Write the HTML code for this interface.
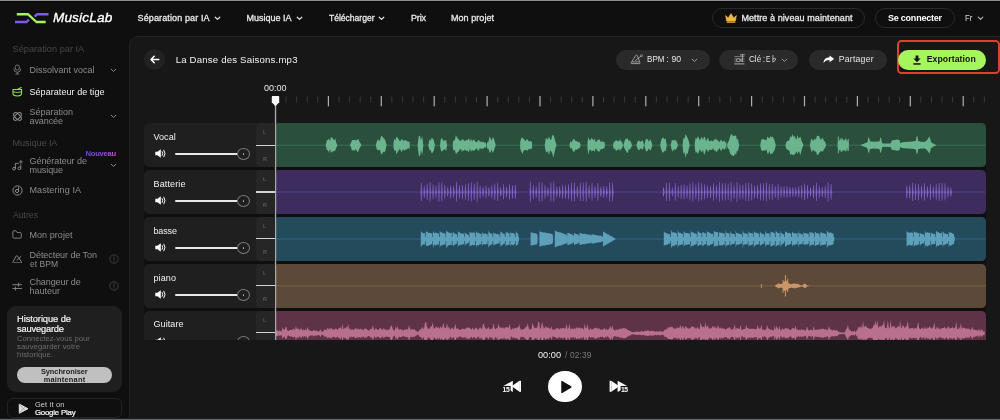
<!DOCTYPE html>
<html><head><meta charset="utf-8"><title>MusicLab</title>
<style>
*{box-sizing:border-box;margin:0;padding:0}
html,body{width:1000px;height:420px;overflow:hidden;background:#0f0f0f;font-family:"Liberation Sans",sans-serif;color:#fff}
body{position:relative}
.abs,.pill,.lbl,.lr,.tr{position:absolute;white-space:nowrap}
.topline{position:absolute;left:0;top:0;width:1000px;height:1px;background:#8e8f91}
.topline2{position:absolute;left:0;top:1px;width:1000px;height:1px;background:#060606}
.botline{position:absolute;left:0;top:418px;width:1000px;height:2px;background:linear-gradient(#1c1e1f 0,#1c1e1f 50%,#636a6c 50%,#636a6c 100%);z-index:50}
.logo{font-size:13.6px;font-style:italic;line-height:17px;color:#fff;-webkit-text-stroke:0.35px #fff}
.nav{font-size:9px;line-height:11px;color:#e8e8e8;-webkit-text-stroke:0.3px #e8e8e8}
.b{font-weight:bold;-webkit-text-stroke:0}
.chev{position:absolute;width:7px;height:5px}
.hb{position:absolute;top:8px;height:20px;border:1px solid #2a2a2a;border-radius:10px}
.main{position:absolute;left:129px;top:36px;width:880px;height:400px;background:#171717;border:1px solid #212121;border-top-left-radius:9px}
.sh{font-size:9.2px;line-height:11px;color:#484848}
.sb{font-size:9px;line-height:11px;color:#8c8c8c}
.sb.on{color:#f2f2f2}
.pill{top:49.5px;height:20.2px;border-radius:10px;background:#2a2a2a}
.pt{font-size:8.7px;line-height:11px;color:#e6e6e6}
.lbl{left:144px;width:122px;height:44.6px;background:#1f1f1f;border-radius:5px 0 0 5px}
.nm{font-size:9px;line-height:11px;color:#f4f4f4}
.spk{position:absolute;left:11px;top:26.5px}
.sl{position:absolute;left:31px;top:30.6px;width:63px;height:1.4px;background:#e8e8e8;border-radius:1px}
.kn{position:absolute;left:93.1px;top:25.4px;width:12.7px;height:12px;border:1px solid #7c7c7c;border-radius:50%;background:#1f1f1f}
.kn:after{content:"";position:absolute;left:4.5px;top:4.2px;width:1.6px;height:1.6px;background:#bbb;border-radius:50%}
.lr{left:255.7px;width:18.5px;height:44.6px;background:#262626;border-radius:4px 0 0 4px}
.lr span{position:absolute;left:7.3px;font-size:5.5px;line-height:6px;color:#5a5a5a;font-weight:bold}
.lr .l{top:6px} .lr .r{top:32.7px}
.lr i{position:absolute;left:0;top:21.7px;width:19.2px;height:1.1px;background:#d2d2d2}
.tr{left:276px;width:709.5px;height:44.6px;border-radius:1.5px 4.5px 4.5px 1.5px}
.bottom{position:absolute;left:130px;top:339.5px;width:870px;height:81px;background:#171717}
.hs{font-size:7.6px;line-height:9px;color:#6c6c6c}
.sy{font-size:7.4px;line-height:8px;font-weight:bold;color:#1c1c1c}
</style></head><body>
<div id="root" style="position:absolute;left:0;top:0;width:1000px;height:420px;will-change:transform">
<div class="topline"></div><div class="topline2"></div>

<!-- logo -->
<svg class="abs" style="left:13px;top:11px" width="38" height="14" viewBox="0 0 38 14">
<path d="M3.8,3.3H15.2L23.4,11H32.7" stroke="#a3f55b" stroke-width="2.4" fill="none" stroke-linejoin="round"/>
<path d="M2,11H13.5L15.9,8.7" stroke="#7a5af5" stroke-width="2.4" fill="none" stroke-linejoin="round"/>
<path d="M35.5,3.3H24L21.6,5.5" stroke="#7a5af5" stroke-width="2.4" fill="none" stroke-linejoin="round"/>
</svg>
<div class="abs logo" style="left:52.9px;letter-spacing:0.173px;top:9.2px;">MusicLab</div>

<div class="abs nav" style="left:137.6px;letter-spacing:0.122px;top:13px;">Séparation par IA</div><svg class="chev" style="left:213.7px;top:16.3px" viewBox="0 0 7 5"><path d="M1.2,1.2L3.5,3.4L5.8,1.2" stroke="#e4e4e4" stroke-width="1.2" fill="none" stroke-linecap="round" stroke-linejoin="round"/></svg>
<div class="abs nav" style="left:246.6px;letter-spacing:-0.003px;top:13px;">Musique IA</div><svg class="chev" style="left:295.7px;top:16.3px" viewBox="0 0 7 5"><path d="M1.2,1.2L3.5,3.4L5.8,1.2" stroke="#e4e4e4" stroke-width="1.2" fill="none" stroke-linecap="round" stroke-linejoin="round"/></svg>
<div class="abs nav" style="left:328.5px;transform:scaleX(0.9473);transform-origin:0 0;top:13px;">Télécharger</div><svg class="chev" style="left:378px;top:16.3px" viewBox="0 0 7 5"><path d="M1.2,1.2L3.5,3.4L5.8,1.2" stroke="#e4e4e4" stroke-width="1.2" fill="none" stroke-linecap="round" stroke-linejoin="round"/></svg>
<div class="abs nav" style="left:411px;letter-spacing:-0.167px;top:13px;">Prix</div>
<div class="abs nav" style="left:451px;letter-spacing:0.052px;top:13px;">Mon projet</div>

<div class="hb" style="left:711.5px;width:153.5px"></div>
<svg class="abs" style="left:725px;top:13px" width="12" height="10" viewBox="0 0 12 10"><path d="M0.6,2.6L3.2,4.9L6,0.6L8.8,4.9L11.4,2.6L10.4,8H1.6Z" fill="#f6b443" stroke="#f6b443" stroke-width="0.6" stroke-linejoin="round"/><rect x="1.6" y="8.6" width="8.8" height="1.2" rx="0.5" fill="#f6b443"/></svg>
<div class="abs nav" style="left:741.4px;letter-spacing:0.081px;top:13px;color:#ececec">Mettre à niveau maintenant</div>
<div class="hb" style="left:875px;width:80px"></div>
<div class="abs nav b" style="left:888px;letter-spacing:-0.230px;top:13px;color:#fff">Se connecter</div>
<div class="abs nav" style="left:965px;transform:scaleX(0.9486);transform-origin:0 0;top:13.2px;-webkit-text-stroke:0;font-size:8.4px;color:#d8d8d8">Fr</div>
<svg class="chev" style="left:977px;top:16.3px" viewBox="0 0 7 5"><path d="M1.2,1.2L3.5,3.4L5.8,1.2" stroke="#b8b8b8" stroke-width="1.1" fill="none" stroke-linecap="round" stroke-linejoin="round"/></svg>

<!-- sidebar -->
<div class="abs sh" style="left:12.5px;letter-spacing:0.015px;top:43.5px;">Séparation par IA</div>
<svg class="abs" style="left:12.8px;top:64px" width="8.6" height="11" viewBox="0 0 10 12"><rect x="2.6" y="0.7" width="4.8" height="6" rx="2.4" stroke="#7e7e7e" stroke-width="1" fill="none"/><path d="M0.9,5.2a4.1,4.1 0 0 0 8.2,0M5,9.4V11.2M3.2,11.3H6.8" stroke="#7e7e7e" stroke-width="1" fill="none" stroke-linecap="round"/></svg>
<div class="abs sb" style="left:29.5px;letter-spacing:-0.002px;top:64.5px;">Dissolvant vocal</div>
<svg class="chev" style="left:110px;top:67.5px" viewBox="0 0 7 5"><path d="M1.2,1.2L3.5,3.4L5.8,1.2" stroke="#8c8c8c" stroke-width="1" fill="none" stroke-linecap="round" stroke-linejoin="round"/></svg>

<svg class="abs" style="left:12.2px;top:87px" width="10.6" height="9.8" viewBox="0 0 11 10"><path d="M1,2.6V6.4Q1,9.2 5.5,9.2Q10,9.2 10,6.4V2.6Z" stroke="#96e052" stroke-width="1.1" fill="none" stroke-linejoin="round"/><path d="M1,4.9Q5.5,6.3 10,4.9" stroke="#96e052" stroke-width="1" fill="none"/><path d="M5.6,2.6L9.6,0.5" stroke="#96e052" stroke-width="1.1" stroke-linecap="round"/></svg>
<div class="abs sb on" style="left:29.5px;letter-spacing:0.055px;top:86.5px;">Séparateur de tige</div>

<svg class="abs" style="left:12px;top:111px" width="11" height="11" viewBox="0 0 11 11"><ellipse cx="5.5" cy="5.5" rx="4.8" ry="2.4" transform="rotate(45 5.5 5.5)" stroke="#8c8c8c" stroke-width="1" fill="none"/><ellipse cx="5.5" cy="5.5" rx="4.8" ry="2.4" transform="rotate(-45 5.5 5.5)" stroke="#8c8c8c" stroke-width="1" fill="none"/></svg>
<div class="abs sb" style="left:29.5px;letter-spacing:-0.005px;top:106.8px;">Séparation</div>
<div class="abs sb" style="left:29.5px;letter-spacing:-0.089px;top:116.3px;">avancée</div>
<svg class="chev" style="left:110px;top:114.2px" viewBox="0 0 7 5"><path d="M1.2,1.2L3.5,3.4L5.8,1.2" stroke="#8c8c8c" stroke-width="1" fill="none" stroke-linecap="round" stroke-linejoin="round"/></svg>

<div class="abs sh" style="left:12.5px;letter-spacing:-0.108px;top:137.8px;">Musique IA</div>
<div class="abs " style="left:85.5px;letter-spacing:-0.221px;top:149.3px;font-size:7.6px;line-height:9px;font-weight:bold;background:linear-gradient(90deg,#6a48f0,#c850c8);-webkit-background-clip:text;background-clip:text;color:transparent">Nouveau</div>
<svg class="abs" style="left:11.5px;top:159.5px" width="12" height="11" viewBox="0 0 12 11"><circle cx="2" cy="8.7" r="1.35" stroke="#8c8c8c" stroke-width="0.95" fill="none"/><circle cx="7.4" cy="8.3" r="1.35" stroke="#8c8c8c" stroke-width="0.95" fill="none"/><path d="M3.4,8.7V3.4H6.4M8.8,8.3V4.8" stroke="#8c8c8c" stroke-width="0.95" fill="none" stroke-linejoin="round" stroke-linecap="round"/><path d="M8.9,0.5V3.3M7.5,1.9H10.3" stroke="#8c8c8c" stroke-width="0.9" stroke-linecap="round"/></svg>
<div class="abs sb" style="left:29.5px;letter-spacing:-0.046px;top:156.3px;">Générateur de</div>
<div class="abs sb" style="left:29.5px;letter-spacing:-0.089px;top:165.2px;">musique</div>
<svg class="chev" style="left:110px;top:163.2px" viewBox="0 0 7 5"><path d="M1.2,1.2L3.5,3.4L5.8,1.2" stroke="#8c8c8c" stroke-width="1" fill="none" stroke-linecap="round" stroke-linejoin="round"/></svg>

<svg class="abs" style="left:12px;top:184.5px" width="11" height="11" viewBox="0 0 11 11"><circle cx="5.5" cy="5.5" r="4.6" stroke="#8c8c8c" stroke-width="1" fill="none"/><circle cx="5" cy="6" r="1.6" stroke="#8c8c8c" stroke-width="1" fill="none"/><path d="M6.6,6V2.6" stroke="#8c8c8c" stroke-width="1" stroke-linecap="round"/></svg>
<div class="abs sb" style="left:29.5px;letter-spacing:0.088px;top:184.5px;">Mastering IA</div>

<div class="abs sh" style="left:12.5px;transform:scaleX(0.9412);transform-origin:0 0;top:209.5px;">Autres</div>
<svg class="abs" style="left:12px;top:230.2px" width="10.2" height="8.8" viewBox="0 0 11 10"><path d="M0.7,2V8Q0.7,9.3 2,9.3H9Q10.3,9.3 10.3,8V4.2Q10.3,2.9 9,2.9H5.4L4.2,0.9H1.8Q0.7,0.9 0.7,2Z" stroke="#8c8c8c" stroke-width="1" fill="none" stroke-linejoin="round"/></svg>
<div class="abs sb" style="left:29.5px;letter-spacing:0.052px;top:229.5px;">Mon projet</div>

<svg class="abs" style="left:12px;top:254.6px" width="10.6" height="8.7" viewBox="0 0 11 9"><path d="M4.3,1.1Q5.1,0.2 5.9,1.2L9.7,7Q10.2,8.2 9,8.2H1.7Q0.5,8.2 1.1,7Z" stroke="#8c8c8c" stroke-width="1" fill="none" stroke-linejoin="round"/><path d="M5.2,5.4L9.4,1.4" stroke="#8c8c8c" stroke-width="1" stroke-linecap="round"/><path d="M6.6,1.8L10.2,-1.4" stroke="#0e0e0e" stroke-width="1.4"/></svg>
<div class="abs sb" style="left:29.5px;letter-spacing:-0.059px;top:249.7px;">Détecteur de Ton</div>
<div class="abs sb" style="left:29.5px;transform:scaleX(0.9487);transform-origin:0 0;top:259px;">et BPM</div>
<svg class="abs" style="left:109px;top:254px" width="10" height="10" viewBox="0 0 10 10"><circle cx="5" cy="5" r="4.2" stroke="#3e3e3e" stroke-width="1" fill="none"/><path d="M5,2.6V5.6M5,6.9V7.4" stroke="#3e3e3e" stroke-width="1" stroke-linecap="round"/></svg>

<svg class="abs" style="left:12.3px;top:281.6px" width="10.4" height="9" viewBox="0 0 11 9"><path d="M0.8,2.6H10.2M0.8,6.6H10.2M7,0.8V4.2M3.6,5V8.4" stroke="#8c8c8c" stroke-width="0.95" stroke-linecap="round"/></svg>
<div class="abs sb" style="left:29.5px;letter-spacing:-0.080px;top:276.8px;">Changeur de</div>
<div class="abs sb" style="left:29.5px;letter-spacing:-0.005px;top:285.5px;">hauteur</div>
<svg class="abs" style="left:109px;top:280.5px" width="10" height="10" viewBox="0 0 10 10"><circle cx="5" cy="5" r="4.2" stroke="#3e3e3e" stroke-width="1" fill="none"/><path d="M5,2.6V5.6M5,6.9V7.4" stroke="#3e3e3e" stroke-width="1" stroke-linecap="round"/></svg>

<div class="abs" style="left:7px;top:305.5px;width:114.5px;height:86px;background:#1f1f1f;border-radius:9px"></div>
<div class="abs " style="left:17.1px;letter-spacing:-0.082px;top:313.8px;font-size:9.3px;line-height:11px;color:#f4f4f4;-webkit-text-stroke:0.2px #f4f4f4">Historique de</div>
<div class="abs " style="left:17.1px;letter-spacing:-0.188px;top:324.1px;font-size:9.3px;line-height:11px;color:#f4f4f4;-webkit-text-stroke:0.2px #f4f4f4">sauvegarde</div>
<div class="abs hs" style="left:17.1px;letter-spacing:0.023px;top:334px;">Connectez-vous pour</div>
<div class="abs hs" style="left:17.1px;letter-spacing:0.105px;top:341.8px;">sauvegarder votre</div>
<div class="abs hs" style="left:17.1px;letter-spacing:0.085px;top:349.7px;">historique.</div>
<div class="abs" style="left:17px;top:367.2px;width:94.5px;height:15.8px;background:#c0c0c0;border-radius:8px"></div>
<div class="abs sy" style="left:40.9px;letter-spacing:-0.041px;top:368.1px;">Synchroniser</div>
<div class="abs sy" style="left:43.7px;letter-spacing:0.220px;top:375.6px;">maintenant</div>
<div class="abs" style="left:7px;top:397.8px;width:114.5px;height:20.5px;border:1px solid #232323;border-radius:6px"></div>
<svg class="abs" style="left:17.6px;top:403.2px" width="11" height="11.4" viewBox="0 0 12 12"><path d="M1.4,1L10.8,6L1.4,11Z" fill="#dcdcdc" stroke="#f4f4f4" stroke-width="1" stroke-linejoin="round"/><path d="M1.6,1.2L7.6,7.8M1.6,10.8L7.6,4.2" stroke="#8a8a8a" stroke-width="0.7"/></svg>
<div class="abs " style="left:34.9px;letter-spacing:0.183px;top:400.5px;font-size:7.4px;line-height:8px;color:#cfcfcf">Get it on</div>
<div class="abs " style="left:34.9px;letter-spacing:-0.168px;top:408.8px;font-size:7.8px;line-height:8.5px;color:#fff;-webkit-text-stroke:0.2px #fff">Google Play</div>

<!-- main -->
<div class="main"></div>
<div class="abs" style="left:143.9px;top:49.4px;width:21.4px;height:20.2px;border-radius:50%;background:#222"></div>
<svg class="abs" style="left:150.3px;top:55.2px" width="10" height="9" viewBox="0 0 10 9"><path d="M4.2,1.2L1,4.5L4.2,7.8M1.4,4.5H8.8" stroke="#fff" stroke-width="1.5" fill="none" stroke-linecap="round" stroke-linejoin="round"/></svg>
<div class="abs " style="left:175.7px;letter-spacing:0.194px;top:54px;font-size:9.6px;line-height:11px;color:#f2f2f2">La Danse des Saisons.mp3</div>

<div class="pill" style="left:616px;width:93.5px"></div>
<svg class="abs" style="left:630px;top:53.5px" width="13" height="12" viewBox="0 0 13 12"><path d="M1.6,9.6Q0.7,9.6 1.2,8.7L5.8,1.4Q6.6,0.6 7.3,1.6L10,8.8Q10.2,9.6 9.4,9.6Z" stroke="#a4a4a4" stroke-width="0.9" fill="none" stroke-linejoin="round"/><path d="M1.6,7.9H9.4" stroke="#a4a4a4" stroke-width="0.9"/><path d="M5.4,6.6L10.8,2.3" stroke="#a4a4a4" stroke-width="0.9" stroke-linecap="round"/><circle cx="11.6" cy="1.6" r="1" stroke="#a4a4a4" stroke-width="0.8" fill="#2a2a2a"/></svg>
<div class="abs pt" style="left:646.5px;transform:scaleX(0.9295);transform-origin:0 0;top:54px;">BPM</div><div class="abs pt" style="left:666.3px;top:53.8px">:</div><div class="abs pt" style="left:671.5px;letter-spacing:-0.172px;top:54px;">90</div>
<svg class="chev" style="left:691px;top:57.5px" viewBox="0 0 7 5"><path d="M1.2,1.2L3.5,3.4L5.8,1.2" stroke="#9a9a9a" stroke-width="1" fill="none" stroke-linecap="round" stroke-linejoin="round"/></svg>

<div class="pill" style="left:718.7px;width:79.6px"></div>
<svg class="abs" style="left:733.5px;top:53.5px" width="12" height="12" viewBox="0 0 12 12"><path d="M0.3,2.6H10.5M0.3,5H10.5M0.3,7.3H10.5" stroke="#8e8e8e" stroke-width="0.8"/><path d="M0.3,9.9H10.5" stroke="#b8b8b8" stroke-width="0.9"/><path d="M8.4,0.6V7.6M6.4,0.8H10.4" stroke="#b0b0b0" stroke-width="0.9" fill="none" stroke-linecap="round"/><ellipse cx="4.2" cy="6.2" rx="1.9" ry="1.5" fill="#2a2a2a" stroke="#b0b0b0" stroke-width="0.9"/><path d="M6,6.2H8.4" stroke="#b0b0b0" stroke-width="0.9"/></svg>
<div class="abs pt" style="left:748.8px;transform:scaleX(0.9351);transform-origin:0 0;top:54px;">Clé</div><div class="abs pt" style="left:763.2px;top:53.8px;transform:scaleX(0.8);transform-origin:0 0">:</div><div class="abs pt" style="left:765.8px;transform:scaleX(0.7590);transform-origin:0 0;top:54px;">E</div>
<svg class="abs" style="left:772.3px;top:55.2px" width="5" height="8" viewBox="0 0 5 8"><path d="M0.9,0.4V7.2Q4.4,5.2 3.5,3.7Q2.6,2.7 0.9,4.2" stroke="#d4d4d4" stroke-width="0.8" fill="none" stroke-linejoin="round" stroke-linecap="round"/></svg>
<svg class="chev" style="left:780.5px;top:57.5px" viewBox="0 0 7 5"><path d="M1.2,1.2L3.5,3.4L5.8,1.2" stroke="#9a9a9a" stroke-width="1" fill="none" stroke-linecap="round" stroke-linejoin="round"/></svg>

<div class="pill" style="left:808.7px;width:78.2px"></div>
<svg class="abs" style="left:822.8px;top:55px" width="11.6" height="8.6" viewBox="0 0 11 9" preserveAspectRatio="none"><path d="M6.2,0.4L10.6,4L6.2,7.6V5.4Q2.4,5 0.4,8.4Q0.8,2.8 6.2,2.4Z" fill="#fff"/></svg>
<div class="abs pt" style="left:838.7px;letter-spacing:0.225px;top:54px;">Partager</div>

<div class="abs" style="left:896.5px;top:40px;width:103.2px;height:34.2px;border:2px solid #d9432b;border-radius:4.5px"></div>
<div class="abs" style="left:898px;top:49.5px;width:88px;height:20.5px;border-radius:10.5px;background:#a4f65c"></div>
<svg class="abs" style="left:912.5px;top:54.5px" width="8" height="10" viewBox="0 0 8 10"><path d="M2.6,0.4H5.4V3.6H7.6L4,7.2L0.4,3.6H2.6Z" fill="#111"/><rect x="0.4" y="8.2" width="7.2" height="1.5" fill="#111"/></svg>
<div class="abs pt" style="left:926.7px;letter-spacing:0.073px;top:54px;color:#111;font-weight:bold">Exportation</div>

<div class="abs " style="left:264.3px;transform:scaleX(1.0883);transform-origin:0 0;top:83.5px;font-size:8.3px;line-height:9px;color:#e8e8e8">00:00</div>
<svg class="abs" style="left:0;top:0" width="1000" height="420" viewBox="0 0 1000 420"><rect x="285.58" y="96.5" width="1" height="6" fill="#3c3c3c"/><rect x="296.16" y="96.5" width="1" height="6" fill="#3c3c3c"/><rect x="306.74" y="96.5" width="1" height="6" fill="#3c3c3c"/><rect x="317.32" y="96.5" width="1" height="6" fill="#3c3c3c"/><rect x="327.80" y="96" width="1.2" height="10.3" fill="#b0b0b0"/><rect x="338.48" y="96.5" width="1" height="6" fill="#3c3c3c"/><rect x="349.06" y="96.5" width="1" height="6" fill="#3c3c3c"/><rect x="359.64" y="96.5" width="1" height="6" fill="#3c3c3c"/><rect x="370.22" y="96.5" width="1" height="6" fill="#3c3c3c"/><rect x="380.70" y="96" width="1.2" height="10.3" fill="#b0b0b0"/><rect x="391.38" y="96.5" width="1" height="6" fill="#3c3c3c"/><rect x="401.96" y="96.5" width="1" height="6" fill="#3c3c3c"/><rect x="412.54" y="96.5" width="1" height="6" fill="#3c3c3c"/><rect x="423.12" y="96.5" width="1" height="6" fill="#3c3c3c"/><rect x="433.60" y="96" width="1.2" height="10.3" fill="#b0b0b0"/><rect x="444.28" y="96.5" width="1" height="6" fill="#3c3c3c"/><rect x="454.86" y="96.5" width="1" height="6" fill="#3c3c3c"/><rect x="465.44" y="96.5" width="1" height="6" fill="#3c3c3c"/><rect x="476.02" y="96.5" width="1" height="6" fill="#3c3c3c"/><rect x="486.50" y="96" width="1.2" height="10.3" fill="#b0b0b0"/><rect x="497.18" y="96.5" width="1" height="6" fill="#3c3c3c"/><rect x="507.76" y="96.5" width="1" height="6" fill="#3c3c3c"/><rect x="518.34" y="96.5" width="1" height="6" fill="#3c3c3c"/><rect x="528.92" y="96.5" width="1" height="6" fill="#3c3c3c"/><rect x="539.40" y="96" width="1.2" height="10.3" fill="#b0b0b0"/><rect x="550.08" y="96.5" width="1" height="6" fill="#3c3c3c"/><rect x="560.66" y="96.5" width="1" height="6" fill="#3c3c3c"/><rect x="571.24" y="96.5" width="1" height="6" fill="#3c3c3c"/><rect x="581.82" y="96.5" width="1" height="6" fill="#3c3c3c"/><rect x="592.30" y="96" width="1.2" height="10.3" fill="#b0b0b0"/><rect x="602.98" y="96.5" width="1" height="6" fill="#3c3c3c"/><rect x="613.56" y="96.5" width="1" height="6" fill="#3c3c3c"/><rect x="624.14" y="96.5" width="1" height="6" fill="#3c3c3c"/><rect x="634.72" y="96.5" width="1" height="6" fill="#3c3c3c"/><rect x="645.20" y="96" width="1.2" height="10.3" fill="#b0b0b0"/><rect x="655.88" y="96.5" width="1" height="6" fill="#3c3c3c"/><rect x="666.46" y="96.5" width="1" height="6" fill="#3c3c3c"/><rect x="677.04" y="96.5" width="1" height="6" fill="#3c3c3c"/><rect x="687.62" y="96.5" width="1" height="6" fill="#3c3c3c"/><rect x="698.10" y="96" width="1.2" height="10.3" fill="#b0b0b0"/><rect x="708.78" y="96.5" width="1" height="6" fill="#3c3c3c"/><rect x="719.36" y="96.5" width="1" height="6" fill="#3c3c3c"/><rect x="729.94" y="96.5" width="1" height="6" fill="#3c3c3c"/><rect x="740.52" y="96.5" width="1" height="6" fill="#3c3c3c"/><rect x="751.00" y="96" width="1.2" height="10.3" fill="#b0b0b0"/><rect x="761.68" y="96.5" width="1" height="6" fill="#3c3c3c"/><rect x="772.26" y="96.5" width="1" height="6" fill="#3c3c3c"/><rect x="782.84" y="96.5" width="1" height="6" fill="#3c3c3c"/><rect x="793.42" y="96.5" width="1" height="6" fill="#3c3c3c"/><rect x="803.90" y="96" width="1.2" height="10.3" fill="#b0b0b0"/><rect x="814.58" y="96.5" width="1" height="6" fill="#3c3c3c"/><rect x="825.16" y="96.5" width="1" height="6" fill="#3c3c3c"/><rect x="835.74" y="96.5" width="1" height="6" fill="#3c3c3c"/><rect x="846.32" y="96.5" width="1" height="6" fill="#3c3c3c"/><rect x="856.80" y="96" width="1.2" height="10.3" fill="#b0b0b0"/><rect x="867.48" y="96.5" width="1" height="6" fill="#3c3c3c"/><rect x="878.06" y="96.5" width="1" height="6" fill="#3c3c3c"/><rect x="888.64" y="96.5" width="1" height="6" fill="#3c3c3c"/><rect x="899.22" y="96.5" width="1" height="6" fill="#3c3c3c"/><rect x="909.70" y="96" width="1.2" height="10.3" fill="#b0b0b0"/><rect x="920.38" y="96.5" width="1" height="6" fill="#3c3c3c"/><rect x="930.96" y="96.5" width="1" height="6" fill="#3c3c3c"/><rect x="941.54" y="96.5" width="1" height="6" fill="#3c3c3c"/><rect x="952.12" y="96.5" width="1" height="6" fill="#3c3c3c"/><rect x="962.60" y="96" width="1.2" height="10.3" fill="#b0b0b0"/><rect x="973.28" y="96.5" width="1" height="6" fill="#3c3c3c"/><rect x="983.86" y="96.5" width="1" height="6" fill="#3c3c3c"/></svg>
<div class="abs" style="left:144px;top:123px;width:841.5px;height:230px;background:#0f0f0f;border-radius:5px"></div>

<div class="lbl" style="top:122.9px">
<svg class="spk" width="12" height="9" viewBox="0 0 12 9"><path d="M0.3,2.8h2.2L5.8,0.3v8.4L2.5,6.2H0.3Z" fill="#fff"/><path d="M7.2,2.6q1.3,1.9 0,3.8M8.9,1.2q2.4,3.3 0,6.6" stroke="#fff" stroke-width="1" fill="none" stroke-linecap="round"/></svg>
<div class="sl"></div><div class="kn"></div></div>
<div class="abs nm" style="left:153.5px;letter-spacing:0.042px;top:131.8px;">Vocal</div>
<div class="lr" style="top:122.9px"><span class="l">L</span><span class="r">R</span><i></i></div>
<div class="tr" style="top:122.9px;background:#2b4f3d"></div>
<div class="lbl" style="top:169.8px">
<svg class="spk" width="12" height="9" viewBox="0 0 12 9"><path d="M0.3,2.8h2.2L5.8,0.3v8.4L2.5,6.2H0.3Z" fill="#fff"/><path d="M7.2,2.6q1.3,1.9 0,3.8M8.9,1.2q2.4,3.3 0,6.6" stroke="#fff" stroke-width="1" fill="none" stroke-linecap="round"/></svg>
<div class="sl"></div><div class="kn"></div></div>
<div class="abs nm" style="left:153.5px;letter-spacing:0.138px;top:178.70000000000002px;">Batterie</div>
<div class="lr" style="top:169.8px"><span class="l">L</span><span class="r">R</span><i></i></div>
<div class="tr" style="top:169.8px;background:#3c2d5e"></div>
<div class="lbl" style="top:216.7px">
<svg class="spk" width="12" height="9" viewBox="0 0 12 9"><path d="M0.3,2.8h2.2L5.8,0.3v8.4L2.5,6.2H0.3Z" fill="#fff"/><path d="M7.2,2.6q1.3,1.9 0,3.8M8.9,1.2q2.4,3.3 0,6.6" stroke="#fff" stroke-width="1" fill="none" stroke-linecap="round"/></svg>
<div class="sl"></div><div class="kn"></div></div>
<div class="abs nm" style="left:153.5px;letter-spacing:-0.133px;top:225.6px;">basse</div>
<div class="lr" style="top:216.7px"><span class="l">L</span><span class="r">R</span><i></i></div>
<div class="tr" style="top:216.7px;background:#234b5c"></div>
<div class="lbl" style="top:263.6px">
<svg class="spk" width="12" height="9" viewBox="0 0 12 9"><path d="M0.3,2.8h2.2L5.8,0.3v8.4L2.5,6.2H0.3Z" fill="#fff"/><path d="M7.2,2.6q1.3,1.9 0,3.8M8.9,1.2q2.4,3.3 0,6.6" stroke="#fff" stroke-width="1" fill="none" stroke-linecap="round"/></svg>
<div class="sl"></div><div class="kn"></div></div>
<div class="abs nm" style="left:153.5px;letter-spacing:0.117px;top:272.5px;">piano</div>
<div class="lr" style="top:263.6px"><span class="l">L</span><span class="r">R</span><i></i></div>
<div class="tr" style="top:263.6px;background:#5c4939"></div>
<div class="lbl" style="top:310.5px">
<svg class="spk" width="12" height="9" viewBox="0 0 12 9"><path d="M0.3,2.8h2.2L5.8,0.3v8.4L2.5,6.2H0.3Z" fill="#fff"/><path d="M7.2,2.6q1.3,1.9 0,3.8M8.9,1.2q2.4,3.3 0,6.6" stroke="#fff" stroke-width="1" fill="none" stroke-linecap="round"/></svg>
<div class="sl"></div><div class="kn"></div></div>
<div class="abs nm" style="left:153.5px;letter-spacing:0.081px;top:319.4px;">Guitare</div>
<div class="lr" style="top:310.5px"><span class="l">L</span><span class="r">R</span><i></i></div>
<div class="tr" style="top:310.5px;background:#5e3347"></div>
<svg class="abs" style="left:0;top:0" width="1000" height="420" viewBox="0 0 1000 420"><rect x="276" y="144.70" width="709.5" height="1" fill="#3b7056"/><path d="M325.8,145.2L325.8,144.90L326.8,140.29L327.9,139.97L328.9,138.46L330.0,140.93L331.0,137.06L332.1,137.44L333.1,139.10L334.2,140.53L335.2,138.23L336.3,142.72L337.3,144.90L337.3,145.50L336.3,147.72L335.2,150.86L334.2,150.70L333.1,151.85L332.1,151.41L331.0,153.12L330.0,148.66L328.9,152.72L327.9,150.32L326.8,149.63L325.8,145.50ZM349.9,145.2L349.9,144.90L350.9,143.25L352.0,140.15L353.0,140.04L354.1,139.95L355.1,140.05L356.2,140.65L357.2,139.49L358.3,139.00L359.3,141.41L360.4,143.30L361.4,144.90L361.4,145.50L360.4,146.74L359.3,148.63L358.3,151.51L357.2,152.04L356.2,149.56L355.1,149.64L354.1,150.67L353.0,149.96L352.0,150.73L350.9,146.82L349.9,145.50ZM375.8,145.2L375.8,144.90L376.9,141.24L378.0,138.89L379.0,141.28L380.1,139.78L381.2,135.72L382.3,136.60L383.4,137.95L384.4,138.84L385.5,140.69L386.6,144.90L386.6,145.50L385.5,150.15L384.4,152.49L383.4,151.43L382.3,153.72L381.2,154.56L380.1,150.04L379.0,149.65L378.0,150.42L376.9,149.32L375.8,145.50ZM393.5,145.2L393.5,142.16L394.5,138.52L395.5,140.57L396.5,136.56L397.6,137.72L398.6,139.13L399.6,141.00L400.6,141.05L401.6,138.94L402.6,139.38L403.6,141.36L404.6,140.21L405.6,140.01L406.7,141.07L407.7,141.53L408.7,141.76L409.7,141.53L409.7,149.41L408.7,148.08L407.7,148.40L406.7,149.62L405.6,149.53L404.6,150.90L403.6,149.23L402.6,150.31L401.6,152.23L400.6,150.06L399.6,148.74L398.6,150.73L397.6,151.84L396.5,154.87L395.5,149.65L394.5,150.96L393.5,147.76ZM417.6,145.2L417.6,144.90L418.7,136.60L419.9,135.43L421.0,140.18L422.2,135.76L423.3,144.90L423.3,145.50L422.2,155.20L421.0,150.15L419.9,156.61L418.7,155.33L417.6,145.50ZM428.4,145.2L428.4,144.90L429.5,139.34L430.6,140.83L431.6,137.93L432.7,138.58L433.8,140.37L434.9,144.90L434.9,145.50L433.8,150.61L432.7,152.54L431.6,153.23L430.6,149.86L429.5,150.50L428.4,145.50ZM439.9,145.2L439.9,144.90L440.9,138.90L442.0,137.90L443.0,140.44L444.0,140.56L445.0,140.60L446.1,139.94L447.1,144.90L447.1,145.50L446.1,151.15L445.0,149.05L444.0,149.72L443.0,149.98L442.0,152.11L440.9,150.42L439.9,145.50ZM452.9,145.2L452.9,142.04L453.9,140.18L454.9,139.99L455.9,134.96L456.9,137.17L457.9,138.38L458.9,139.91L459.9,140.57L460.9,141.03L461.9,139.25L462.9,139.54L463.9,140.24L464.9,141.24L465.9,139.97L466.9,140.27L467.9,139.74L468.9,138.26L470.0,141.43L471.0,138.45L472.0,141.43L473.0,140.13L474.0,139.20L475.0,141.16L476.0,142.01L477.0,142.21L478.0,140.37L479.0,140.05L480.0,142.12L481.0,141.21L482.0,142.62L483.0,141.44L484.0,142.31L485.0,142.92L486.0,142.25L486.0,148.06L485.0,147.34L484.0,147.80L483.0,149.27L482.0,148.19L481.0,149.20L480.0,147.85L479.0,150.36L478.0,150.91L477.0,148.41L476.0,148.73L475.0,149.85L474.0,150.68L473.0,150.73L472.0,149.64L471.0,151.92L470.0,148.32L468.9,152.37L467.9,150.98L466.9,150.50L465.9,150.76L464.9,149.35L463.9,151.14L462.9,149.99L461.9,152.11L460.9,148.98L459.9,149.34L458.9,151.19L457.9,152.01L456.9,153.10L455.9,154.25L454.9,149.89L453.9,150.63L452.9,148.95ZM486.5,145.2L486.5,144.90L487.5,141.95L488.5,141.66L489.6,136.34L490.6,138.16L491.6,140.98L492.6,137.40L493.7,138.17L494.7,141.58L495.7,144.90L495.7,145.50L494.7,148.26L493.7,151.26L492.6,152.85L491.6,149.21L490.6,152.57L489.6,152.58L488.5,148.75L487.5,148.93L486.5,145.50ZM520.2,145.2L520.2,141.70L521.3,138.05L522.4,137.44L523.4,138.71L524.5,139.74L525.6,141.17L526.7,138.89L527.8,139.81L528.9,141.64L529.9,141.09L531.0,141.32L532.1,142.85L532.1,147.81L531.0,149.33L529.9,149.24L528.9,148.45L527.8,150.81L526.7,150.36L525.6,149.96L524.5,150.29L523.4,150.81L522.4,153.97L521.3,151.51L520.2,148.60ZM544.7,145.2L544.7,144.90L545.8,138.24L546.8,138.45L547.9,139.51L549.0,136.17L550.1,139.74L551.1,139.77L552.2,135.74L553.3,134.52L554.4,137.65L555.4,141.48L556.5,144.90L556.5,145.50L555.4,148.20L554.4,153.10L553.3,157.87L552.2,152.92L551.1,151.31L550.1,150.23L549.0,155.29L547.9,150.92L546.8,152.18L545.8,152.06L544.7,145.50ZM569.5,145.2L569.5,144.90L570.5,141.12L571.5,142.40L572.5,140.85L573.5,138.64L574.5,139.25L575.6,141.17L576.6,141.09L577.6,141.79L578.6,142.16L579.6,142.09L580.6,144.90L580.6,145.50L579.6,148.20L578.6,148.47L577.6,149.05L576.6,149.98L575.6,149.14L574.5,151.53L573.5,152.03L572.5,150.09L571.5,147.86L570.5,148.70L569.5,145.50ZM587.5,145.2L587.5,142.09L588.5,136.91L589.5,139.91L590.6,140.35L591.6,137.78L592.6,139.06L593.6,140.39L594.6,138.39L595.6,141.95L596.7,141.63L597.7,139.48L598.7,139.71L599.7,139.59L600.7,141.96L601.7,141.44L602.8,141.39L603.8,142.06L604.8,142.26L604.8,147.69L603.8,148.26L602.8,148.90L601.7,149.34L600.7,148.90L599.7,151.46L598.7,151.23L597.7,151.62L596.7,149.31L595.6,148.16L594.6,152.30L593.6,149.88L592.6,150.64L591.6,151.52L590.6,149.51L589.5,149.92L588.5,154.65L587.5,148.54ZM613.0,145.2L613.0,144.90L614.0,141.53L615.0,141.77L616.0,139.49L617.0,141.03L618.0,140.65L619.0,141.78L620.0,138.83L621.0,141.81L622.0,141.59L623.0,144.90L623.0,145.50L622.0,148.31L621.0,149.01L620.0,151.21L619.0,148.24L618.0,150.26L617.0,149.68L616.0,151.27L615.0,148.30L614.0,149.51L613.0,145.50ZM623.5,145.2L623.5,144.90L624.6,140.96L625.6,138.85L626.7,138.69L627.8,138.78L628.8,141.29L629.9,139.88L630.9,142.33L632.0,144.90L632.0,145.50L630.9,147.76L629.9,150.05L628.8,148.86L627.8,152.90L626.7,152.18L625.6,150.32L624.6,148.86L623.5,145.50ZM636.5,145.2L636.5,144.90L637.6,141.47L638.6,140.51L639.7,140.92L640.8,142.01L641.9,140.82L642.9,140.40L644.0,144.90L644.0,145.50L642.9,149.64L641.9,148.96L640.8,148.14L639.7,149.71L638.6,150.19L637.6,148.85L636.5,145.50ZM644.5,145.2L644.5,144.90L645.6,139.69L646.7,139.03L647.8,139.17L649.0,141.93L650.1,139.11L651.2,141.19L652.3,144.90L652.3,145.50L651.2,148.92L650.1,150.68L649.0,148.32L647.8,150.29L646.7,151.87L645.6,150.25L644.5,145.50ZM660.2,145.2L660.2,144.90L661.3,140.07L662.4,137.87L663.5,137.87L664.5,139.23L665.6,138.34L666.7,144.90L666.7,145.50L665.6,151.58L664.5,150.58L663.5,152.41L662.4,152.51L661.3,149.71L660.2,145.50ZM670.7,145.2L670.7,144.90L671.7,140.59L672.8,139.96L673.8,140.20L674.8,140.34L675.8,140.27L676.9,142.12L677.9,144.90L677.9,145.50L676.9,148.07L675.8,149.67L674.8,149.59L673.8,149.49L672.8,151.49L671.7,149.83L670.7,145.50ZM682.5,145.2L682.5,144.90L683.5,137.40L684.6,138.68L685.6,133.86L686.6,136.17L687.6,137.68L688.7,140.87L689.7,144.90L689.7,145.50L688.7,149.22L687.6,154.21L686.6,153.03L685.6,158.23L684.6,152.07L683.5,154.26L682.5,145.50ZM694.8,145.2L694.8,142.23L695.8,137.26L696.8,139.25L697.9,136.08L698.9,137.97L699.9,140.83L700.9,137.92L701.9,137.06L703.0,140.04L704.0,136.52L705.0,137.32L706.0,141.34L707.0,139.41L708.1,137.63L709.1,141.15L710.1,141.39L711.1,140.21L712.1,140.77L713.1,141.47L714.2,139.13L715.2,139.60L716.2,139.12L717.2,139.99L718.2,140.69L719.3,142.25L720.3,140.17L721.3,140.01L722.3,141.62L723.3,141.58L724.4,140.13L725.4,142.88L726.4,141.35L726.4,149.81L725.4,147.15L724.4,150.04L723.3,148.65L722.3,148.58L721.3,151.20L720.3,149.63L719.3,148.12L718.2,150.12L717.2,150.96L716.2,152.24L715.2,150.15L714.2,150.63L713.1,148.24L712.1,149.60L711.1,150.30L710.1,149.66L709.1,149.76L708.1,152.37L707.0,150.10L706.0,148.79L705.0,153.44L704.0,154.71L703.0,149.42L701.9,152.47L700.9,151.22L699.9,149.35L698.9,151.67L697.9,154.36L696.8,151.85L695.8,153.07L694.8,148.40ZM727.0,145.2L727.0,144.90L728.0,142.15L729.0,140.38L730.0,136.81L731.0,134.53L732.0,133.97L733.0,136.36L734.0,135.80L735.0,135.73L736.0,135.41L737.0,139.71L738.0,138.78L739.0,144.90L739.0,145.50L738.0,151.83L737.0,150.01L736.0,155.34L735.0,152.96L734.0,156.19L733.0,155.57L732.0,155.62L731.0,154.72L730.0,153.07L729.0,149.29L728.0,148.86L727.0,145.50ZM760.2,145.2L760.2,144.90L761.2,139.68L762.3,139.33L763.3,138.72L764.3,140.00L765.4,139.49L766.4,140.64L767.4,136.47L768.5,137.67L769.5,138.60L770.5,136.10L771.6,137.35L772.6,136.44L773.6,138.58L774.7,140.78L775.7,144.90L775.7,145.50L774.7,149.91L773.6,151.47L772.6,153.48L771.6,153.43L770.5,154.62L769.5,150.63L768.5,153.44L767.4,153.66L766.4,149.01L765.4,150.80L764.3,150.29L763.3,150.73L762.3,150.89L761.2,149.80L760.2,145.50ZM785.4,145.2L785.4,144.90L786.4,142.05L787.4,141.01L788.4,140.87L789.4,140.06L790.4,136.08L791.4,137.49L792.4,133.78L793.4,136.92L794.4,135.44L795.4,138.34L796.4,139.80L797.4,134.84L798.4,138.58L799.4,137.77L800.4,136.61L801.4,140.46L802.4,142.44L803.4,144.90L803.4,145.50L802.4,147.51L801.4,150.69L800.4,155.25L799.4,152.24L798.4,151.30L797.4,154.14L796.4,151.16L795.4,153.31L794.4,154.74L793.4,154.99L792.4,154.86L791.4,154.03L790.4,155.29L789.4,150.76L788.4,149.98L787.4,149.67L786.4,148.98L785.4,145.50ZM809.9,145.2L809.9,144.90L810.9,139.99L811.9,138.25L812.9,141.33L813.9,139.75L814.9,138.38L815.9,140.03L816.9,135.72L818.0,135.95L819.0,135.77L820.0,138.61L821.0,140.28L822.0,137.63L823.0,138.59L824.0,141.22L825.0,141.26L826.0,144.90L826.0,145.50L825.0,148.46L824.0,148.64L823.0,151.58L822.0,151.55L821.0,151.05L820.0,151.71L819.0,153.43L818.0,154.91L816.9,154.73L815.9,150.75L814.9,152.26L813.9,150.23L812.9,149.78L811.9,152.53L810.9,149.82L809.9,145.50ZM837.6,145.2L837.6,142.26L838.6,140.80L839.6,141.70L840.6,139.33L841.6,140.05L842.6,140.60L843.7,139.93L844.7,140.72L845.7,140.74L846.7,141.14L847.7,143.15L848.7,142.26L848.7,148.68L847.7,147.33L846.7,148.81L845.7,148.82L844.7,150.19L843.7,150.28L842.6,150.64L841.6,150.35L840.6,149.99L839.6,149.08L838.6,149.78L837.6,147.79ZM837.80,136.60h1.05V153.37h-1.05ZM839.22,139.70h1.05V150.43h-1.05ZM840.64,138.00h1.05V152.04h-1.05ZM842.06,138.80h1.05V151.28h-1.05ZM843.48,140.00h1.05V150.14h-1.05ZM844.90,138.60h1.05V151.47h-1.05ZM846.32,139.40h1.05V150.71h-1.05ZM847.74,139.00h1.05V151.09h-1.05ZM837.8,142.00H848.9V148.40H837.8ZM860.6,145.2L860.6,144.98L861.1,144.82L861.5,144.65L862.0,144.48L862.4,144.26L862.9,144.15L863.3,143.96L863.8,143.74L864.2,143.59L864.7,143.33L865.1,143.26L865.6,143.10L866.0,142.88L866.5,142.83L866.9,142.17L867.4,141.90L867.8,140.44L868.3,137.45L868.7,137.65L869.2,137.41L869.6,139.62L870.1,141.46L870.5,141.21L871.0,141.45L871.4,141.38L871.9,141.55L872.3,141.62L872.8,141.72L873.2,141.87L873.7,141.83L874.1,141.53L874.6,141.76L875.0,141.83L875.5,141.61L875.9,141.69L876.4,141.48L876.8,141.70L877.3,141.72L877.7,141.37L878.2,141.66L878.6,141.33L879.1,141.38L879.5,141.15L880.0,139.02L880.4,137.16L880.9,137.76L881.3,138.98L881.8,141.51L882.2,142.86L882.7,143.60L883.1,143.52L883.6,143.60L884.0,143.55L884.5,143.61L884.9,143.54L885.4,143.50L885.8,143.57L886.3,143.45L886.7,143.60L887.2,143.57L887.6,143.56L888.1,143.53L888.5,143.45L889.0,143.54L889.4,143.47L889.9,143.42L890.3,143.59L890.8,143.04L891.2,141.95L891.7,140.72L892.1,140.34L892.6,140.36L893.0,140.46L893.5,140.34L893.9,140.23L894.4,140.14L894.8,140.07L895.3,139.97L895.7,139.71L896.2,139.55L896.6,139.50L897.1,139.45L897.5,139.92L898.0,139.41L898.4,139.82L898.9,139.88L899.3,139.98L899.8,141.03L900.2,142.46L900.7,143.42L901.1,143.02L901.6,142.53L902.0,142.31L902.5,142.27L902.9,142.25L903.4,142.32L903.8,141.99L904.3,141.94L904.7,141.98L905.2,142.07L905.6,142.02L906.1,142.04L906.5,141.87L907.0,141.84L907.4,141.94L907.9,141.68L908.3,141.70L908.8,141.88L909.2,141.60L909.7,141.62L910.1,141.77L910.6,141.72L911.0,141.48L911.5,141.75L911.9,141.55L912.4,141.28L912.8,141.57L913.3,141.42L913.7,141.20L914.2,141.14L914.6,141.02L915.1,141.00L915.5,140.63L916.0,140.84L916.4,137.18L916.9,136.06L917.3,135.78L917.8,138.13L918.2,141.25L918.7,141.17L919.1,141.31L919.6,141.25L920.0,141.50L920.5,141.71L920.9,141.84L921.4,141.66L921.8,141.88L922.3,141.75L922.7,141.74L923.2,141.63L923.6,141.95L924.1,141.75L924.5,141.95L925.0,141.65L925.4,141.29L925.9,140.91L926.3,140.49L926.8,140.51L927.2,139.79L927.7,139.28L928.1,138.41L928.6,137.85L929.0,136.60L929.5,137.16L929.9,137.34L930.4,139.37L930.8,141.72L931.3,142.31L931.7,142.46L932.2,142.94L932.6,143.36L933.1,143.60L933.5,143.79L934.0,144.03L934.4,144.21L934.9,144.39L935.3,144.58L935.8,144.77L935.8,145.62L935.3,145.80L934.9,145.98L934.4,146.16L934.0,146.34L933.5,146.56L933.1,146.76L932.6,146.98L932.2,147.39L931.7,147.85L931.3,148.00L930.8,148.58L930.4,150.86L929.9,152.82L929.5,153.00L929.0,153.54L928.6,152.33L928.1,151.79L927.7,150.94L927.2,150.45L926.8,149.75L926.3,149.77L925.9,149.37L925.4,148.99L925.0,148.65L924.5,148.35L924.1,148.55L923.6,148.36L923.2,148.67L922.7,148.56L922.3,148.55L921.8,148.42L921.4,148.64L920.9,148.45L920.5,148.58L920.0,148.79L919.6,149.04L919.1,148.97L918.7,149.11L918.2,149.03L917.8,152.06L917.3,154.34L916.9,154.06L916.4,152.98L916.0,149.43L915.5,149.63L915.1,149.28L914.6,149.25L914.2,149.14L913.7,149.08L913.3,148.86L912.8,148.72L912.4,149.00L911.9,148.74L911.5,148.55L911.0,148.81L910.6,148.58L910.1,148.53L909.7,148.67L909.2,148.69L908.8,148.42L908.3,148.59L907.9,148.62L907.4,148.36L907.0,148.46L906.5,148.43L906.1,148.27L905.6,148.28L905.2,148.23L904.7,148.32L904.3,148.36L903.8,148.31L903.4,147.99L902.9,148.06L902.5,148.04L902.0,148.01L901.6,147.79L901.1,147.31L900.7,146.93L900.2,147.86L899.8,149.25L899.3,150.27L898.9,150.36L898.4,150.42L898.0,150.81L897.5,150.33L897.1,150.78L896.6,150.73L896.2,150.68L895.7,150.52L895.3,150.27L894.8,150.18L894.4,150.11L893.9,150.02L893.5,149.91L893.0,149.80L892.6,149.89L892.1,149.91L891.7,149.55L891.2,148.35L890.8,147.30L890.3,146.77L889.9,146.92L889.4,146.88L889.0,146.81L888.5,146.89L888.1,146.82L887.6,146.79L887.2,146.78L886.7,146.75L886.3,146.90L885.8,146.78L885.4,146.84L884.9,146.81L884.5,146.74L884.0,146.80L883.6,146.76L883.1,146.82L882.7,146.76L882.2,147.47L881.8,148.78L881.3,151.23L880.9,152.42L880.4,153.00L880.0,151.19L879.5,149.13L879.1,148.91L878.6,148.95L878.2,148.63L877.7,148.92L877.3,148.57L876.8,148.59L876.4,148.81L875.9,148.61L875.5,148.69L875.0,148.46L874.6,148.53L874.1,148.76L873.7,148.47L873.2,148.43L872.8,148.57L872.3,148.67L871.9,148.74L871.4,148.91L871.0,148.84L870.5,149.07L870.1,148.83L869.6,150.62L869.2,152.75L868.7,152.53L868.3,152.72L867.8,149.82L867.4,148.40L866.9,148.14L866.5,147.50L866.0,147.45L865.6,147.23L865.1,147.08L864.7,147.01L864.2,146.76L863.8,146.62L863.3,146.40L862.9,146.22L862.4,146.11L862.0,145.90L861.5,145.73L861.1,145.57L860.6,145.42Z" fill="#6ab48e"/><rect x="276" y="191.60" width="709.5" height="1" fill="#54418a"/><path d="M420.98,182.63h0.64L421.92,190.60V193.60L421.62,201.09h-0.64L420.68,193.60V190.60ZM420.60,189.55L422.60,191.50V192.70L420.60,194.65ZM423.92,185.75h0.64L424.86,190.60V193.60L424.56,198.13h-0.64L423.62,193.60V190.60ZM423.54,189.39L425.54,191.50V192.70L423.54,194.81ZM426.86,183.74h0.64L427.80,190.60V193.60L427.50,200.04h-0.64L426.56,193.60V190.60ZM426.48,189.37L428.48,191.50V192.70L426.48,194.83ZM429.80,182.00h0.64L430.74,190.60V193.60L430.44,201.70h-0.64L429.50,193.60V190.60ZM429.42,190.36L431.42,191.50V192.70L429.42,193.84ZM432.74,184.61h0.64L433.68,190.60V193.60L433.38,199.21h-0.64L432.44,193.60V190.60ZM432.36,189.85L434.36,191.50V192.70L432.36,194.35ZM435.68,185.55h0.64L436.62,190.60V193.60L436.32,198.32h-0.64L435.38,193.60V190.60ZM435.30,190.24L437.30,191.50V192.70L435.30,193.96ZM438.62,181.93h0.64L439.56,190.60V193.60L439.26,201.76h-0.64L438.32,193.60V190.60ZM438.24,189.58L440.24,191.50V192.70L438.24,194.62ZM441.56,182.41h0.64L442.50,190.60V193.60L442.20,201.30h-0.64L441.26,193.60V190.60ZM441.18,190.33L443.18,191.50V192.70L441.18,193.87ZM444.50,185.09h0.64L445.44,190.60V193.60L445.14,198.76h-0.64L444.20,193.60V190.60ZM444.12,190.50L446.12,191.50V192.70L444.12,193.70ZM447.44,187.08h0.64L448.38,190.60V193.60L448.08,196.87h-0.64L447.14,193.60V190.60ZM447.06,190.24L449.06,191.50V192.70L447.06,193.96ZM450.38,185.42h0.64L451.32,190.60V193.60L451.02,198.45h-0.64L450.08,193.60V190.60ZM450.00,190.15L452.00,191.50V192.70L450.00,194.05ZM453.32,186.25h0.64L454.26,190.60V193.60L453.96,197.66h-0.64L453.02,193.60V190.60ZM452.94,189.69L454.94,191.50V192.70L452.94,194.51ZM456.26,181.84h0.64L457.20,190.60V193.60L456.90,201.85h-0.64L455.96,193.60V190.60ZM455.88,189.67L457.88,191.50V192.70L455.88,194.53ZM459.20,185.37h0.64L460.14,190.60V193.60L459.84,198.50h-0.64L458.90,193.60V190.60ZM458.82,190.14L460.82,191.50V192.70L458.82,194.06ZM462.14,184.94h0.64L463.08,190.60V193.60L462.78,198.91h-0.64L461.84,193.60V190.60ZM461.76,190.33L463.76,191.50V192.70L461.76,193.87ZM465.08,184.39h0.64L466.02,190.60V193.60L465.72,199.42h-0.64L464.78,193.60V190.60ZM464.70,189.78L466.70,191.50V192.70L464.70,194.42ZM468.02,182.89h0.64L468.96,190.60V193.60L468.66,200.85h-0.64L467.72,193.60V190.60ZM467.64,190.09L469.64,191.50V192.70L467.64,194.11ZM470.96,182.33h0.64L471.90,190.60V193.60L471.60,201.39h-0.64L470.66,193.60V190.60ZM470.58,189.92L472.58,191.50V192.70L470.58,194.28ZM473.90,183.68h0.64L474.84,190.60V193.60L474.54,200.10h-0.64L473.60,193.60V190.60ZM473.52,189.65L475.52,191.50V192.70L473.52,194.55ZM476.84,181.70h0.64L477.78,190.60V193.60L477.48,201.98h-0.64L476.54,193.60V190.60ZM476.46,190.47L478.46,191.50V192.70L476.46,193.73ZM479.78,185.49h0.64L480.72,190.60V193.60L480.42,198.38h-0.64L479.48,193.60V190.60ZM479.40,190.48L481.40,191.50V192.70L479.40,193.72ZM482.72,186.68h0.64L483.66,190.60V193.60L483.36,197.24h-0.64L482.42,193.60V190.60ZM482.34,189.81L484.34,191.50V192.70L482.34,194.39ZM485.66,185.41h0.64L486.60,190.60V193.60L486.30,198.45h-0.64L485.36,193.60V190.60ZM485.28,190.28L487.28,191.50V192.70L485.28,193.92ZM488.60,187.11h0.64L489.54,190.60V193.60L489.24,196.84h-0.64L488.30,193.60V190.60ZM488.22,189.59L490.22,191.50V192.70L488.22,194.61ZM491.54,185.24h0.64L492.48,190.60V193.60L492.18,198.61h-0.64L491.24,193.60V190.60ZM491.16,190.09L493.16,191.50V192.70L491.16,194.11ZM494.48,183.50h0.64L495.42,190.60V193.60L495.12,200.27h-0.64L494.18,193.60V190.60ZM494.10,189.57L496.10,191.50V192.70L494.10,194.63ZM497.42,182.61h0.64L498.36,190.60V193.60L498.06,201.12h-0.64L497.12,193.60V190.60ZM497.04,189.54L499.04,191.50V192.70L497.04,194.66ZM500.36,187.51h0.64L501.30,190.60V193.60L501.00,196.46h-0.64L500.06,193.60V190.60ZM499.98,189.37L501.98,191.50V192.70L499.98,194.83ZM503.30,184.24h0.64L504.24,190.60V193.60L503.94,199.57h-0.64L503.00,193.60V190.60ZM502.92,189.77L504.92,191.50V192.70L502.92,194.43ZM506.24,186.75h0.64L507.18,190.60V193.60L506.88,197.18h-0.64L505.94,193.60V190.60ZM505.86,189.39L507.86,191.50V192.70L505.86,194.81ZM509.18,184.35h0.64L510.12,190.60V193.60L509.82,199.46h-0.64L508.88,193.60V190.60ZM508.80,190.12L510.80,191.50V192.70L508.80,194.08ZM512.12,185.29h0.64L513.06,190.60V193.60L512.76,198.57h-0.64L511.82,193.60V190.60ZM511.74,190.32L513.74,191.50V192.70L511.74,193.88ZM515.06,185.11h0.64L516.00,190.60V193.60L515.70,198.74h-0.64L514.76,193.60V190.60ZM514.68,190.31L516.68,191.50V192.70L514.68,193.89ZM529.98,181.65h0.64L530.92,190.60V193.60L530.62,202.02h-0.64L529.68,193.60V190.60ZM529.60,189.86L531.60,191.50V192.70L529.60,194.34ZM532.92,184.65h0.64L533.86,190.60V193.60L533.56,199.18h-0.64L532.62,193.60V190.60ZM532.54,189.79L534.54,191.50V192.70L532.54,194.41ZM535.86,186.46h0.64L536.80,190.60V193.60L536.50,197.46h-0.64L535.56,193.60V190.60ZM535.48,189.99L537.48,191.50V192.70L535.48,194.21ZM538.80,181.94h0.64L539.74,190.60V193.60L539.44,201.76h-0.64L538.50,193.60V190.60ZM538.42,190.46L540.42,191.50V192.70L538.42,193.74ZM541.74,182.25h0.64L542.68,190.60V193.60L542.38,201.46h-0.64L541.44,193.60V190.60ZM541.36,190.34L543.36,191.50V192.70L541.36,193.86ZM544.68,185.23h0.64L545.62,190.60V193.60L545.32,198.63h-0.64L544.38,193.60V190.60ZM544.30,189.74L546.30,191.50V192.70L544.30,194.46ZM547.62,187.33h0.64L548.56,190.60V193.60L548.26,196.63h-0.64L547.32,193.60V190.60ZM547.24,189.98L549.24,191.50V192.70L547.24,194.22ZM550.56,182.22h0.64L551.50,190.60V193.60L551.20,201.48h-0.64L550.26,193.60V190.60ZM550.18,190.15L552.18,191.50V192.70L550.18,194.05ZM553.50,181.60h0.64L554.44,190.60V193.60L554.14,202.07h-0.64L553.20,193.60V190.60ZM553.12,189.48L555.12,191.50V192.70L553.12,194.72ZM556.44,186.47h0.64L557.38,190.60V193.60L557.08,197.45h-0.64L556.14,193.60V190.60ZM556.06,189.91L558.06,191.50V192.70L556.06,194.29ZM559.38,186.40h0.64L560.32,190.60V193.60L560.02,197.51h-0.64L559.08,193.60V190.60ZM559.00,190.15L561.00,191.50V192.70L559.00,194.05ZM562.32,185.01h0.64L563.26,190.60V193.60L562.96,198.83h-0.64L562.02,193.60V190.60ZM561.94,190.05L563.94,191.50V192.70L561.94,194.15ZM565.26,185.20h0.64L566.20,190.60V193.60L565.90,198.65h-0.64L564.96,193.60V190.60ZM564.88,189.75L566.88,191.50V192.70L564.88,194.45ZM568.20,184.25h0.64L569.14,190.60V193.60L568.84,199.56h-0.64L567.90,193.60V190.60ZM567.82,190.39L569.82,191.50V192.70L567.82,193.81ZM571.14,182.47h0.64L572.08,190.60V193.60L571.78,201.25h-0.64L570.84,193.60V190.60ZM570.76,189.46L572.76,191.50V192.70L570.76,194.74ZM574.08,182.46h0.64L575.02,190.60V193.60L574.72,201.26h-0.64L573.78,193.60V190.60ZM573.70,189.57L575.70,191.50V192.70L573.70,194.63ZM577.02,185.94h0.64L577.96,190.60V193.60L577.66,197.95h-0.64L576.72,193.60V190.60ZM576.64,189.59L578.64,191.50V192.70L576.64,194.61ZM579.96,182.78h0.64L580.90,190.60V193.60L580.60,200.95h-0.64L579.66,193.60V190.60ZM579.58,190.16L581.58,191.50V192.70L579.58,194.04ZM582.90,182.52h0.64L583.84,190.60V193.60L583.54,201.20h-0.64L582.60,193.60V190.60ZM582.52,189.67L584.52,191.50V192.70L582.52,194.53ZM585.84,181.82h0.64L586.78,190.60V193.60L586.48,201.87h-0.64L585.54,193.60V190.60ZM585.46,189.72L587.46,191.50V192.70L585.46,194.48ZM588.78,185.55h0.64L589.72,190.60V193.60L589.42,198.32h-0.64L588.48,193.60V190.60ZM588.40,189.84L590.40,191.50V192.70L588.40,194.36ZM591.72,182.91h0.64L592.66,190.60V193.60L592.36,200.83h-0.64L591.42,193.60V190.60ZM591.34,189.94L593.34,191.50V192.70L591.34,194.26ZM594.66,185.98h0.64L595.60,190.60V193.60L595.30,197.91h-0.64L594.36,193.60V190.60ZM594.28,189.54L596.28,191.50V192.70L594.28,194.66ZM597.60,183.02h0.64L598.54,190.60V193.60L598.24,200.72h-0.64L597.30,193.60V190.60ZM597.22,189.61L599.22,191.50V192.70L597.22,194.59ZM600.54,186.72h0.64L601.48,190.60V193.60L601.18,197.21h-0.64L600.24,193.60V190.60ZM600.16,189.49L602.16,191.50V192.70L600.16,194.71ZM603.48,185.88h0.64L604.42,190.60V193.60L604.12,198.01h-0.64L603.18,193.60V190.60ZM603.10,189.33L605.10,191.50V192.70L603.10,194.87ZM606.42,186.30h0.64L607.36,190.60V193.60L607.06,197.61h-0.64L606.12,193.60V190.60ZM606.04,189.86L608.04,191.50V192.70L606.04,194.34ZM609.36,182.25h0.64L610.30,190.60V193.60L610.00,201.45h-0.64L609.06,193.60V190.60ZM608.98,189.38L610.98,191.50V192.70L608.98,194.82ZM612.30,182.83h0.64L613.24,190.60V193.60L612.94,200.90h-0.64L612.00,193.60V190.60ZM611.92,189.64L613.92,191.50V192.70L611.92,194.56ZM663.18,187.17h0.64L664.12,190.60V193.60L663.82,196.78h-0.64L662.88,193.60V190.60ZM662.80,189.56L664.80,191.50V192.70L662.80,194.64ZM666.12,182.94h0.64L667.06,190.60V193.60L666.76,200.80h-0.64L665.82,193.60V190.60ZM665.74,190.00L667.74,191.50V192.70L665.74,194.20ZM669.06,182.50h0.64L670.00,190.60V193.60L669.70,201.22h-0.64L668.76,193.60V190.60ZM668.68,189.74L670.68,191.50V192.70L668.68,194.46ZM672.00,187.53h0.64L672.94,190.60V193.60L672.64,196.44h-0.64L671.70,193.60V190.60ZM671.62,190.31L673.62,191.50V192.70L671.62,193.89ZM674.94,183.00h0.64L675.88,190.60V193.60L675.58,200.75h-0.64L674.64,193.60V190.60ZM674.56,190.24L676.56,191.50V192.70L674.56,193.96ZM677.88,186.02h0.64L678.82,190.60V193.60L678.52,197.87h-0.64L677.58,193.60V190.60ZM677.50,190.45L679.50,191.50V192.70L677.50,193.75ZM680.82,184.70h0.64L681.76,190.60V193.60L681.46,199.13h-0.64L680.52,193.60V190.60ZM680.44,190.44L682.44,191.50V192.70L680.44,193.76ZM683.76,184.33h0.64L684.70,190.60V193.60L684.40,199.48h-0.64L683.46,193.60V190.60ZM683.38,190.28L685.38,191.50V192.70L683.38,193.92ZM686.70,185.46h0.64L687.64,190.60V193.60L687.34,198.41h-0.64L686.40,193.60V190.60ZM686.32,189.94L688.32,191.50V192.70L686.32,194.26ZM689.64,183.15h0.64L690.58,190.60V193.60L690.28,200.60h-0.64L689.34,193.60V190.60ZM689.26,189.79L691.26,191.50V192.70L689.26,194.41ZM692.58,181.99h0.64L693.52,190.60V193.60L693.22,201.71h-0.64L692.28,193.60V190.60ZM692.20,190.50L694.20,191.50V192.70L692.20,193.70ZM695.52,184.49h0.64L696.46,190.60V193.60L696.16,199.33h-0.64L695.22,193.60V190.60ZM695.14,190.01L697.14,191.50V192.70L695.14,194.19ZM698.46,182.27h0.64L699.40,190.60V193.60L699.10,201.43h-0.64L698.16,193.60V190.60ZM698.08,190.05L700.08,191.50V192.70L698.08,194.15ZM701.40,183.15h0.64L702.34,190.60V193.60L702.04,200.61h-0.64L701.10,193.60V190.60ZM701.02,190.39L703.02,191.50V192.70L701.02,193.81ZM704.34,184.24h0.64L705.28,190.60V193.60L704.98,199.56h-0.64L704.04,193.60V190.60ZM703.96,189.80L705.96,191.50V192.70L703.96,194.40ZM707.28,185.55h0.64L708.22,190.60V193.60L707.92,198.32h-0.64L706.98,193.60V190.60ZM706.90,190.00L708.90,191.50V192.70L706.90,194.20ZM710.22,185.99h0.64L711.16,190.60V193.60L710.86,197.90h-0.64L709.92,193.60V190.60ZM709.84,190.06L711.84,191.50V192.70L709.84,194.14ZM713.16,183.22h0.64L714.10,190.60V193.60L713.80,200.54h-0.64L712.86,193.60V190.60ZM712.78,189.82L714.78,191.50V192.70L712.78,194.38ZM716.10,185.18h0.64L717.04,190.60V193.60L716.74,198.67h-0.64L715.80,193.60V190.60ZM715.72,189.77L717.72,191.50V192.70L715.72,194.43ZM719.04,182.03h0.64L719.98,190.60V193.60L719.68,201.67h-0.64L718.74,193.60V190.60ZM718.66,190.50L720.66,191.50V192.70L718.66,193.70ZM721.98,183.34h0.64L722.92,190.60V193.60L722.62,200.43h-0.64L721.68,193.60V190.60ZM721.60,189.76L723.60,191.50V192.70L721.60,194.44ZM724.92,183.08h0.64L725.86,190.60V193.60L725.56,200.67h-0.64L724.62,193.60V190.60ZM724.54,189.43L726.54,191.50V192.70L724.54,194.77ZM727.86,183.87h0.64L728.80,190.60V193.60L728.50,199.92h-0.64L727.56,193.60V190.60ZM727.48,190.23L729.48,191.50V192.70L727.48,193.97ZM730.80,181.71h0.64L731.74,190.60V193.60L731.44,201.97h-0.64L730.50,193.60V190.60ZM730.42,190.04L732.42,191.50V192.70L730.42,194.16ZM733.74,185.32h0.64L734.68,190.60V193.60L734.38,198.55h-0.64L733.44,193.60V190.60ZM733.36,189.79L735.36,191.50V192.70L733.36,194.41ZM736.68,181.68h0.64L737.62,190.60V193.60L737.32,202.00h-0.64L736.38,193.60V190.60ZM736.30,189.90L738.30,191.50V192.70L736.30,194.30ZM739.62,184.32h0.64L740.56,190.60V193.60L740.26,199.49h-0.64L739.32,193.60V190.60ZM739.24,189.32L741.24,191.50V192.70L739.24,194.88ZM742.56,184.45h0.64L743.50,190.60V193.60L743.20,199.36h-0.64L742.26,193.60V190.60ZM742.18,189.93L744.18,191.50V192.70L742.18,194.27ZM745.50,183.11h0.64L746.44,190.60V193.60L746.14,200.64h-0.64L745.20,193.60V190.60ZM745.12,189.97L747.12,191.50V192.70L745.12,194.23ZM748.44,182.47h0.64L749.38,190.60V193.60L749.08,201.25h-0.64L748.14,193.60V190.60ZM748.06,189.51L750.06,191.50V192.70L748.06,194.69ZM751.38,183.47h0.64L752.32,190.60V193.60L752.02,200.30h-0.64L751.08,193.60V190.60ZM751.00,190.17L753.00,191.50V192.70L751.00,194.03ZM754.32,185.65h0.64L755.26,190.60V193.60L754.96,198.23h-0.64L754.02,193.60V190.60ZM753.94,190.21L755.94,191.50V192.70L753.94,193.99ZM757.26,184.98h0.64L758.20,190.60V193.60L757.90,198.86h-0.64L756.96,193.60V190.60ZM756.88,189.31L758.88,191.50V192.70L756.88,194.89ZM760.20,183.17h0.64L761.14,190.60V193.60L760.84,200.59h-0.64L759.90,193.60V190.60ZM759.82,189.93L761.82,191.50V192.70L759.82,194.27ZM763.14,183.18h0.64L764.08,190.60V193.60L763.78,200.57h-0.64L762.84,193.60V190.60ZM762.76,189.61L764.76,191.50V192.70L762.76,194.59ZM766.08,182.56h0.64L767.02,190.60V193.60L766.72,201.16h-0.64L765.78,193.60V190.60ZM765.70,190.14L767.70,191.50V192.70L765.70,194.06ZM769.02,184.26h0.64L769.96,190.60V193.60L769.66,199.55h-0.64L768.72,193.60V190.60ZM768.64,190.14L770.64,191.50V192.70L768.64,194.06ZM771.96,183.74h0.64L772.90,190.60V193.60L772.60,200.04h-0.64L771.66,193.60V190.60ZM771.58,190.07L773.58,191.50V192.70L771.58,194.13ZM774.90,186.12h0.64L775.84,190.60V193.60L775.54,197.78h-0.64L774.60,193.60V190.60ZM774.52,190.46L776.52,191.50V192.70L774.52,193.74ZM777.84,183.78h0.64L778.78,190.60V193.60L778.48,200.01h-0.64L777.54,193.60V190.60ZM777.46,189.40L779.46,191.50V192.70L777.46,194.80ZM780.78,186.24h0.64L781.72,190.60V193.60L781.42,197.67h-0.64L780.48,193.60V190.60ZM780.40,190.48L782.40,191.50V192.70L780.40,193.72ZM783.72,186.53h0.64L784.66,190.60V193.60L784.36,197.39h-0.64L783.42,193.60V190.60ZM783.34,189.81L785.34,191.50V192.70L783.34,194.39ZM786.66,186.02h0.64L787.60,190.60V193.60L787.30,197.88h-0.64L786.36,193.60V190.60ZM786.28,189.92L788.28,191.50V192.70L786.28,194.28ZM789.60,186.64h0.64L790.54,190.60V193.60L790.24,197.29h-0.64L789.30,193.60V190.60ZM789.22,190.03L791.22,191.50V192.70L789.22,194.17ZM792.54,187.11h0.64L793.48,190.60V193.60L793.18,196.84h-0.64L792.24,193.60V190.60ZM792.16,190.14L794.16,191.50V192.70L792.16,194.06ZM795.48,187.43h0.64L796.42,190.60V193.60L796.12,196.53h-0.64L795.18,193.60V190.60ZM795.10,189.50L797.10,191.50V192.70L795.10,194.70ZM798.42,186.52h0.64L799.36,190.60V193.60L799.06,197.40h-0.64L798.12,193.60V190.60ZM798.04,190.16L800.04,191.50V192.70L798.04,194.04ZM801.36,185.32h0.64L802.30,190.60V193.60L802.00,198.54h-0.64L801.06,193.60V190.60ZM800.98,190.33L802.98,191.50V192.70L800.98,193.87ZM804.30,183.40h0.64L805.24,190.60V193.60L804.94,200.36h-0.64L804.00,193.60V190.60ZM803.92,189.90L805.92,191.50V192.70L803.92,194.30ZM807.24,184.99h0.64L808.18,190.60V193.60L807.88,198.86h-0.64L806.94,193.60V190.60ZM806.86,189.80L808.86,191.50V192.70L806.86,194.40ZM810.18,187.43h0.64L811.12,190.60V193.60L810.82,196.54h-0.64L809.88,193.60V190.60ZM809.80,190.22L811.80,191.50V192.70L809.80,193.98ZM813.12,185.62h0.64L814.06,190.60V193.60L813.76,198.26h-0.64L812.82,193.60V190.60ZM812.74,189.70L814.74,191.50V192.70L812.74,194.50ZM816.06,182.71h0.64L817.00,190.60V193.60L816.70,201.02h-0.64L815.76,193.60V190.60ZM815.68,189.33L817.68,191.50V192.70L815.68,194.87ZM819.00,185.85h0.64L819.94,190.60V193.60L819.64,198.04h-0.64L818.70,193.60V190.60ZM818.62,190.44L820.62,191.50V192.70L818.62,193.76ZM821.94,187.05h0.64L822.88,190.60V193.60L822.58,196.90h-0.64L821.64,193.60V190.60ZM821.56,189.73L823.56,191.50V192.70L821.56,194.47ZM824.88,185.82h0.64L825.82,190.60V193.60L825.52,198.07h-0.64L824.58,193.60V190.60ZM824.50,190.34L826.50,191.50V192.70L824.50,193.86ZM827.82,181.93h0.64L828.76,190.60V193.60L828.46,201.76h-0.64L827.52,193.60V190.60ZM827.44,190.32L829.44,191.50V192.70L827.44,193.88ZM830.76,183.94h0.64L831.70,190.60V193.60L831.40,199.85h-0.64L830.46,193.60V190.60ZM830.38,190.31L832.38,191.50V192.70L830.38,193.89ZM906.48,185.43h0.64L907.42,190.60V193.60L907.12,198.44h-0.64L906.18,193.60V190.60ZM906.10,190.37L908.10,191.50V192.70L906.10,193.83ZM909.42,185.31h0.64L910.36,190.60V193.60L910.06,198.55h-0.64L909.12,193.60V190.60ZM909.04,190.43L911.04,191.50V192.70L909.04,193.77ZM912.36,182.63h0.64L913.30,190.60V193.60L913.00,201.10h-0.64L912.06,193.60V190.60ZM911.98,189.45L913.98,191.50V192.70L911.98,194.75ZM915.30,183.87h0.64L916.24,190.60V193.60L915.94,199.92h-0.64L915.00,193.60V190.60ZM914.92,190.12L916.92,191.50V192.70L914.92,194.08ZM918.24,183.64h0.64L919.18,190.60V193.60L918.88,200.14h-0.64L917.94,193.60V190.60ZM917.86,189.37L919.86,191.50V192.70L917.86,194.83ZM921.18,185.38h0.64L922.12,190.60V193.60L921.82,198.49h-0.64L920.88,193.60V190.60ZM920.80,189.66L922.80,191.50V192.70L920.80,194.54ZM924.12,183.07h0.64L925.06,190.60V193.60L924.76,200.67h-0.64L923.82,193.60V190.60ZM923.74,189.89L925.74,191.50V192.70L923.74,194.31ZM927.06,186.21h0.64L928.00,190.60V193.60L927.70,197.69h-0.64L926.76,193.60V190.60ZM926.68,189.75L928.68,191.50V192.70L926.68,194.45ZM930.00,183.39h0.64L930.94,190.60V193.60L930.64,200.37h-0.64L929.70,193.60V190.60ZM929.62,190.19L931.62,191.50V192.70L929.62,194.01ZM932.94,186.31h0.64L933.88,190.60V193.60L933.58,197.60h-0.64L932.64,193.60V190.60ZM932.56,190.34L934.56,191.50V192.70L932.56,193.86ZM935.88,184.12h0.64L936.82,190.60V193.60L936.52,199.69h-0.64L935.58,193.60V190.60ZM935.50,189.62L937.50,191.50V192.70L935.50,194.58ZM938.82,182.75h0.64L939.76,190.60V193.60L939.46,200.99h-0.64L938.52,193.60V190.60ZM938.44,189.71L940.44,191.50V192.70L938.44,194.49ZM941.76,182.93h0.64L942.70,190.60V193.60L942.40,200.81h-0.64L941.46,193.60V190.60ZM941.38,190.39L943.38,191.50V192.70L941.38,193.81ZM944.70,183.22h0.64L945.64,190.60V193.60L945.34,200.53h-0.64L944.40,193.60V190.60ZM944.32,190.21L946.32,191.50V192.70L944.32,193.99ZM947.64,186.40h0.64L948.58,190.60V193.60L948.28,197.52h-0.64L947.34,193.60V190.60ZM947.26,190.11L949.26,191.50V192.70L947.26,194.09ZM950.58,187.53h0.64L951.52,190.60V193.60L951.22,196.44h-0.64L950.28,193.60V190.60ZM950.20,189.63L952.20,191.50V192.70L950.20,194.57Z" fill="#7f63c6"/><rect x="276" y="238.50" width="709.5" height="1" fill="#336880"/><path d="M420.8,239.0L420.8,231.33L421.5,231.76L422.3,232.54L423.0,233.51L423.7,232.97L424.4,232.95L425.2,233.87L425.2,243.66L424.4,244.70L423.7,244.50L423.0,244.31L422.3,245.09L421.5,246.19L420.8,246.99ZM425.8,239.0L425.8,231.37L426.6,231.98L427.5,231.51L428.3,232.89L429.1,233.09L429.9,232.78L430.7,233.07L431.6,233.42L432.4,232.66L432.4,244.97L431.6,244.06L430.7,244.85L429.9,245.22L429.1,245.30L428.3,245.40L427.5,246.23L426.6,245.46L425.8,246.32ZM433.0,239.0L433.0,230.42L433.8,232.54L434.5,233.35L435.3,232.55L436.0,232.57L436.8,233.37L437.5,233.43L438.3,232.88L439.0,234.17L439.0,243.43L438.3,244.93L437.5,244.40L436.8,244.44L436.0,245.81L435.3,245.04L434.5,244.57L433.8,245.67L433.0,247.90ZM439.7,239.0L439.7,230.22L440.4,232.22L441.1,232.01L441.8,232.83L442.6,232.82L443.3,233.04L444.0,233.30L444.7,233.80L445.5,233.10L445.5,244.71L444.7,244.44L444.0,244.24L443.3,245.00L442.6,245.59L441.8,244.74L441.1,246.08L440.4,245.84L439.7,248.08ZM446.1,239.0L446.1,230.15L446.9,231.38L447.8,231.75L448.6,232.70L449.4,232.17L450.2,233.45L451.0,232.66L451.8,232.73L451.8,244.70L451.0,245.26L450.2,244.80L449.4,245.35L448.6,244.95L447.8,246.17L446.9,246.67L446.1,248.54ZM452.5,239.0L452.5,232.63L453.3,232.27L454.0,232.86L454.8,233.78L455.6,233.72L456.3,234.53L457.1,233.89L457.1,244.33L456.3,243.19L455.6,244.44L454.8,244.59L454.0,245.06L453.3,246.25L452.5,245.12ZM457.8,239.0L457.8,230.13L458.5,232.26L459.3,232.24L460.1,232.63L460.9,233.74L461.7,233.16L462.4,233.44L463.2,233.85L464.0,233.48L464.0,244.10L463.2,244.52L462.4,244.26L461.7,245.15L460.9,244.29L460.1,245.83L459.3,245.10L458.5,245.40L457.8,247.47ZM464.7,239.0L464.7,232.37L465.4,233.02L466.1,233.60L466.8,234.02L467.5,234.70L468.2,234.78L468.9,234.91L468.9,242.72L468.2,243.34L467.5,243.02L466.8,243.67L466.1,244.17L465.4,244.52L464.7,246.00ZM469.5,239.0L469.5,230.93L470.2,232.53L471.0,232.58L471.7,232.66L472.4,232.75L473.1,232.82L473.9,232.28L474.6,232.98L475.3,232.56L475.3,244.91L474.6,245.01L473.9,245.41L473.1,244.91L472.4,244.67L471.7,245.50L471.0,245.60L470.2,245.71L469.5,246.94ZM476.0,239.0L476.0,230.61L476.7,232.33L477.5,233.25L478.3,232.20L479.1,233.30L479.9,233.75L480.7,233.95L481.5,233.28L481.5,244.61L480.7,244.28L479.9,243.80L479.1,245.15L478.3,245.55L477.5,245.02L476.7,245.68L476.0,247.61ZM482.1,239.0L482.1,231.89L482.9,233.17L483.7,233.86L484.5,233.82L485.3,233.33L486.1,233.94L486.9,234.19L487.7,234.09L487.7,244.27L486.9,243.75L486.1,243.77L485.3,244.84L484.5,244.32L483.7,244.02L482.9,244.49L482.1,245.89ZM488.3,239.0L488.3,230.01L489.0,232.37L489.7,232.67L490.4,232.94L491.1,233.79L491.8,233.86L492.5,233.60L492.5,244.80L491.8,244.20L491.1,244.55L490.4,245.19L489.7,245.67L489.0,245.88L488.3,248.35ZM493.2,239.0L493.2,232.31L494.0,233.05L494.8,233.65L495.6,233.37L496.4,234.33L497.2,233.87L498.0,234.47L498.9,234.30L499.7,234.23L499.7,243.57L498.9,243.45L498.0,243.60L497.2,243.80L496.4,244.00L495.6,244.53L494.8,244.72L494.0,244.44L493.2,245.19ZM500.3,239.0L500.3,230.78L501.1,232.56L501.9,232.08L502.6,233.18L503.4,233.72L504.2,233.92L504.9,234.44L504.9,243.89L504.2,243.82L503.4,243.91L502.6,244.89L501.9,245.81L501.1,245.23L500.3,247.28ZM505.6,239.0L505.6,231.15L506.4,232.71L507.2,231.98L508.0,233.24L508.8,233.32L509.6,233.03L509.6,245.34L508.8,244.43L508.0,244.75L507.2,245.62L506.4,245.35L505.6,246.78ZM510.3,239.0L510.3,231.07L511.1,233.30L511.9,233.07L512.7,232.98L513.6,233.04L514.4,234.30L515.2,234.39L515.2,243.90L514.4,243.72L513.6,245.31L512.7,245.33L511.9,244.58L511.1,244.54L510.3,246.21ZM515.8,239.0L515.8,230.96L516.7,232.60L517.5,233.14L518.4,234.38L518.4,243.45L517.5,244.63L516.7,245.30L515.8,247.12ZM420.8,237.11H519.0V240.89H420.8ZM530.6,239.0L530.6,232.38L531.3,232.19L532.0,232.76L532.7,232.66L533.4,233.10L534.1,233.20L534.8,233.05L535.5,233.54L536.2,233.54L536.9,233.78L537.6,235.97L537.6,242.03L536.9,244.22L536.2,244.46L535.5,244.46L534.8,244.95L534.1,244.80L533.4,244.90L532.7,245.34L532.0,245.24L531.3,245.81L530.6,245.62ZM539.4,239.0L539.4,231.48L540.1,231.78L540.8,231.58L541.5,232.10L542.3,232.16L543.0,232.40L543.7,232.42L544.4,232.49L545.1,232.40L545.8,232.78L546.6,233.03L547.3,233.10L548.0,232.93L548.7,233.46L549.4,233.37L550.1,233.60L550.9,233.63L551.6,233.89L552.3,233.90L553.0,236.06L553.0,241.94L552.3,244.10L551.6,244.11L550.9,244.37L550.1,244.40L549.4,244.63L548.7,244.54L548.0,245.07L547.3,244.90L546.6,244.97L545.8,245.22L545.1,245.60L544.4,245.51L543.7,245.58L543.0,245.60L542.3,245.84L541.5,245.90L540.8,246.42L540.1,246.22L539.4,246.52ZM554.8,239.0L554.8,230.61L555.5,230.71L556.3,231.14L557.0,231.63L557.7,231.91L558.5,231.69L559.2,232.17L559.9,232.56L560.7,232.45L561.4,232.86L562.2,233.04L562.9,233.23L563.6,233.71L564.4,233.93L565.1,233.98L565.8,234.49L566.6,234.52L567.3,236.58L567.3,241.42L566.6,243.48L565.8,243.51L565.1,244.02L564.4,244.07L563.6,244.29L562.9,244.77L562.2,244.96L561.4,245.14L560.7,245.55L559.9,245.44L559.2,245.83L558.5,246.31L557.7,246.09L557.0,246.37L556.3,246.86L555.5,247.29L554.8,247.39ZM567.3,239.0L567.3,232.74L568.0,232.98L568.8,233.12L569.5,233.41L570.3,233.78L571.0,234.13L571.8,234.39L572.5,234.50L573.3,234.74L574.0,236.67L574.0,241.33L573.3,243.26L572.5,243.50L571.8,243.61L571.0,243.87L570.3,244.22L569.5,244.59L568.8,244.88L568.0,245.02L567.3,245.26ZM574.0,239.0L574.0,233.04L574.8,233.46L575.5,233.63L576.3,234.06L577.1,234.29L577.9,234.61L578.6,234.75L579.4,236.61L579.4,241.39L578.6,243.25L577.9,243.39L577.1,243.71L576.3,243.94L575.5,244.37L574.8,244.54L574.0,244.96ZM579.4,239.0L579.4,233.24L580.1,233.36L580.8,233.28L581.5,233.36L582.2,233.75L583.0,233.76L583.7,233.95L584.4,233.87L585.1,233.86L585.8,234.23L586.5,234.14L587.2,234.40L587.9,234.60L588.7,234.45L589.4,234.69L590.1,234.84L590.8,234.86L591.5,236.62L591.5,241.38L590.8,243.14L590.1,243.16L589.4,243.31L588.7,243.55L587.9,243.40L587.2,243.60L586.5,243.86L585.8,243.77L585.1,244.14L584.4,244.13L583.7,244.05L583.0,244.24L582.2,244.25L581.5,244.64L580.8,244.72L580.1,244.64L579.4,244.76ZM591.5,239.0L591.5,234.21L592.2,234.33L592.9,234.47L593.7,234.55L594.4,234.78L595.1,234.98L595.8,235.11L596.5,235.24L597.2,235.25L598.0,235.43L598.7,235.45L599.4,235.67L600.1,235.76L600.8,235.83L601.6,236.17L602.3,236.31L603.0,237.45L603.0,240.55L602.3,241.69L601.6,241.83L600.8,242.17L600.1,242.24L599.4,242.33L598.7,242.55L598.0,242.57L597.2,242.75L596.5,242.76L595.8,242.89L595.1,243.02L594.4,243.22L593.7,243.45L592.9,243.53L592.2,243.67L591.5,243.79ZM603.0,239.0L603.0,231.54L603.7,231.84L604.4,232.17L605.1,232.76L605.8,232.90L606.5,233.70L607.2,233.78L607.9,234.41L608.6,234.60L609.4,235.25L610.1,235.41L610.8,235.88L611.5,236.25L612.2,236.73L612.9,237.19L613.6,237.51L614.3,237.97L615.0,238.39L615.7,238.77L615.7,239.23L615.0,239.61L614.3,240.03L613.6,240.49L612.9,240.81L612.2,241.27L611.5,241.75L610.8,242.12L610.1,242.59L609.4,242.75L608.6,243.40L607.9,243.59L607.2,244.22L606.5,244.30L605.8,245.10L605.1,245.24L604.4,245.83L603.7,246.16L603.0,246.46ZM663.8,239.0L663.8,231.04L664.6,232.54L665.4,232.62L666.2,232.88L667.0,233.62L667.8,233.80L668.6,234.03L669.4,234.11L670.2,234.90L670.2,242.83L669.4,243.92L668.6,243.51L667.8,244.55L667.0,244.75L666.2,244.86L665.4,245.01L664.6,245.21L663.8,246.33ZM670.9,239.0L670.9,229.14L671.7,231.53L672.4,232.43L673.2,232.52L674.0,231.73L674.7,233.06L675.5,232.45L676.3,233.44L677.1,233.58L677.1,244.78L676.3,244.54L675.5,245.11L674.7,245.23L674.0,246.40L673.2,245.75L672.4,246.05L671.7,246.55L670.9,248.88ZM677.7,239.0L677.7,229.58L678.5,232.36L679.2,232.81L680.0,232.76L680.7,232.87L681.5,233.86L682.2,233.76L683.0,233.92L683.0,244.42L682.2,244.13L681.5,244.54L680.7,245.10L680.0,245.10L679.2,245.23L678.5,245.67L677.7,248.00ZM683.6,239.0L683.6,230.77L684.4,232.06L685.2,232.70L686.0,233.16L686.8,232.93L687.6,233.02L688.4,233.18L689.2,233.74L690.0,233.34L690.0,244.56L689.2,244.52L688.4,244.29L687.6,244.60L686.8,245.33L686.0,244.30L685.2,245.07L684.4,245.68L683.6,246.66ZM690.7,239.0L690.7,229.63L691.5,232.15L692.2,232.19L693.0,232.25L693.8,232.73L694.5,233.72L695.3,233.12L696.1,233.88L696.8,233.74L696.8,243.99L696.1,244.24L695.3,244.65L694.5,244.22L693.8,245.70L693.0,246.07L692.2,245.56L691.5,246.07L690.7,248.68ZM697.5,239.0L697.5,231.23L698.3,231.17L699.1,232.60L699.9,232.73L700.7,233.29L701.6,232.92L701.6,245.39L700.7,244.90L699.9,244.87L699.1,244.88L698.3,246.31L697.5,246.35ZM702.2,239.0L702.2,232.23L703.0,232.47L703.8,232.29L704.6,233.21L705.4,233.41L706.3,233.11L706.3,244.47L705.4,244.10L704.6,244.45L703.8,245.60L703.0,245.76L702.2,245.69ZM706.9,239.0L706.9,230.27L707.7,232.09L708.5,232.09L709.3,232.64L710.0,232.69L710.8,233.39L711.6,233.89L712.4,233.61L713.2,234.34L713.2,243.73L712.4,243.86L711.6,244.40L710.8,244.19L710.0,244.95L709.3,245.85L708.5,245.22L707.7,245.26L706.9,246.92ZM713.8,239.0L713.8,230.38L714.5,231.62L715.3,232.27L716.0,231.64L716.8,232.08L717.5,231.90L718.2,232.89L718.2,245.46L717.5,245.64L716.8,246.24L716.0,246.30L715.3,245.25L714.5,245.90L713.8,248.07ZM718.9,239.0L718.9,232.01L719.6,232.39L720.4,232.45L721.1,233.18L721.8,232.40L722.6,233.05L723.3,233.87L724.1,233.20L724.8,233.20L724.8,244.33L724.1,245.07L723.3,244.49L722.6,245.18L721.8,245.65L721.1,244.82L720.4,246.04L719.6,245.23L718.9,245.35ZM725.5,239.0L725.5,229.70L726.3,232.55L727.1,233.33L727.9,232.90L728.7,233.28L729.6,233.86L729.6,243.93L728.7,244.98L727.9,245.29L727.1,245.09L726.3,245.66L725.5,248.06ZM730.2,239.0L730.2,230.78L731.0,233.00L731.8,233.27L732.6,233.99L733.3,234.05L734.1,233.95L734.9,234.55L734.9,243.71L734.1,243.83L733.3,243.78L732.6,243.94L731.8,244.50L731.0,244.51L730.2,246.43ZM735.6,239.0L735.6,230.08L736.4,232.98L737.2,233.08L738.0,233.74L738.8,233.06L739.6,233.76L740.4,233.99L741.2,234.42L742.0,234.07L742.0,243.96L741.2,243.44L740.4,243.57L739.6,244.47L738.8,244.46L738.0,244.67L737.2,244.47L736.4,244.68L735.6,247.38ZM742.6,239.0L742.6,229.54L743.4,232.37L744.1,233.30L744.9,233.45L745.6,232.98L746.3,233.68L747.1,233.81L747.8,233.79L747.8,244.23L747.1,243.69L746.3,244.39L745.6,244.65L744.9,244.45L744.1,244.21L743.4,245.31L742.6,248.66ZM748.4,239.0L748.4,230.69L749.2,232.41L750.0,232.92L750.8,232.98L751.6,233.59L752.4,233.15L753.2,233.67L753.2,244.45L752.4,244.50L751.6,244.72L750.8,245.31L750.0,245.47L749.2,245.14L748.4,247.07ZM753.8,239.0L753.8,230.72L754.6,232.31L755.4,232.40L756.2,232.97L756.9,232.86L757.7,233.32L758.5,233.40L759.3,233.78L759.3,244.37L758.5,244.17L757.7,244.42L756.9,244.58L756.2,244.56L755.4,245.21L754.6,246.20L753.8,247.65ZM759.9,239.0L759.9,231.48L760.7,232.84L761.4,233.58L762.2,233.44L763.0,234.21L763.7,234.03L764.5,234.69L764.5,243.26L763.7,243.63L763.0,243.63L762.2,244.16L761.4,244.79L760.7,245.44L759.9,245.78ZM765.1,239.0L765.1,230.29L765.9,232.79L766.7,233.32L767.4,233.58L768.2,233.25L769.0,233.42L769.7,233.90L769.7,244.26L769.0,244.36L768.2,245.13L767.4,244.68L766.7,244.24L765.9,245.55L765.1,247.20ZM770.4,239.0L770.4,231.38L771.1,232.41L771.9,231.63L772.7,232.05L773.4,232.89L774.2,232.66L774.9,233.58L774.9,244.26L774.2,245.76L773.4,244.67L772.7,246.12L771.9,246.31L771.1,246.00L770.4,246.63ZM775.6,239.0L775.6,231.11L776.4,231.51L777.2,232.61L778.1,233.21L778.9,233.06L779.7,233.09L779.7,244.49L778.9,245.24L778.1,245.06L777.2,245.49L776.4,245.97L775.6,246.97ZM780.4,239.0L780.4,230.37L781.2,233.18L782.0,233.08L782.8,234.24L783.6,234.40L784.4,234.54L784.4,243.08L783.6,243.29L782.8,243.68L782.0,244.72L781.2,244.94L780.4,247.74ZM785.0,239.0L785.0,231.56L785.8,231.82L786.6,231.93L787.4,233.33L788.2,233.08L789.0,232.52L789.7,233.30L790.5,233.58L791.3,233.47L791.3,244.13L790.5,244.22L789.7,244.24L789.0,244.97L788.2,245.24L787.4,244.26L786.6,245.97L785.8,246.15L785.0,246.90ZM792.0,239.0L792.0,231.29L792.8,232.60L793.6,233.13L794.4,233.15L795.2,233.15L796.0,233.41L796.8,233.52L797.6,232.91L797.6,244.70L796.8,244.32L796.0,244.10L795.2,245.00L794.4,245.04L793.6,244.59L792.8,245.06L792.0,247.01ZM798.3,239.0L798.3,229.66L799.0,233.40L799.8,233.07L800.5,233.62L801.3,234.41L802.0,233.92L802.8,234.41L802.8,243.52L802.0,244.29L801.3,243.73L800.5,244.58L799.8,244.46L799.0,244.53L798.3,247.79ZM803.4,239.0L803.4,232.04L804.2,233.13L804.9,232.89L805.7,233.14L806.5,233.77L807.2,233.54L808.0,233.64L808.7,233.97L808.7,243.55L808.0,244.31L807.2,244.58L806.5,243.83L805.7,244.81L804.9,244.76L804.2,244.34L803.4,245.32ZM809.4,239.0L809.4,231.13L810.2,232.51L811.0,232.30L811.7,232.81L812.5,232.62L813.3,233.54L814.1,233.15L814.1,245.17L813.3,244.50L812.5,244.85L811.7,244.85L811.0,246.09L810.2,244.98L809.4,247.27ZM814.8,239.0L814.8,232.12L815.6,231.90L816.4,233.54L817.2,232.71L818.0,233.70L818.8,233.57L819.6,234.14L819.6,244.25L818.8,244.61L818.0,244.48L817.2,245.56L816.4,244.64L815.6,245.73L814.8,246.14ZM820.2,239.0L820.2,232.06L821.0,232.51L821.7,232.41L822.5,233.24L823.2,233.29L824.0,232.96L824.7,233.64L825.4,233.84L826.2,233.96L826.2,244.07L825.4,244.56L824.7,244.48L824.0,245.31L823.2,244.85L822.5,244.68L821.7,245.04L821.0,245.45L820.2,246.27ZM826.8,239.0L826.8,230.36L827.6,231.40L828.4,232.22L829.1,233.21L829.9,232.33L830.6,232.48L831.4,232.74L832.1,233.27L832.9,233.39L833.6,233.95L833.6,243.71L832.9,244.53L832.1,245.05L831.4,244.95L830.6,244.91L829.9,245.87L829.1,244.91L828.4,245.55L827.6,246.80L826.8,247.91ZM663.8,237.02H834.3V240.98H663.8ZM906.6,239.0L906.6,231.01L907.4,231.64L908.2,232.40L909.0,232.54L909.8,232.99L910.6,232.14L911.4,232.58L912.2,232.94L913.0,232.49L913.0,245.55L912.2,244.52L911.4,245.63L910.6,245.70L909.8,244.50L909.0,245.35L908.2,245.47L907.4,245.79L906.6,246.80ZM913.6,239.0L913.6,230.68L914.4,232.02L915.2,232.62L916.0,232.57L916.8,232.57L917.6,232.65L918.5,233.42L919.3,232.72L919.3,244.88L918.5,244.35L917.6,244.92L916.8,245.31L916.0,245.62L915.2,244.84L914.4,246.11L913.6,247.04ZM919.9,239.0L919.9,231.96L920.6,233.42L921.3,233.89L922.0,233.69L922.7,234.58L923.5,234.37L924.2,234.63L924.2,243.12L923.5,243.76L922.7,243.06L922.0,244.30L921.3,243.88L920.6,244.39L919.9,246.38ZM924.8,239.0L924.8,230.27L925.6,232.59L926.3,232.92L927.1,232.20L927.9,232.30L928.6,232.90L929.4,232.84L930.2,232.77L930.2,245.03L929.4,244.93L928.6,245.58L927.9,246.18L927.1,246.31L926.3,245.36L925.6,245.25L924.8,248.39ZM930.8,239.0L930.8,231.58L931.6,233.45L932.3,233.37L933.1,233.64L933.8,234.22L934.5,233.75L935.3,234.56L935.3,243.71L934.5,244.15L933.8,243.67L933.1,244.61L932.3,244.24L931.6,244.10L930.8,246.95ZM935.9,239.0L935.9,230.26L936.7,231.61L937.4,232.42L938.2,231.93L939.0,232.47L939.7,233.28L940.5,233.14L941.2,232.64L942.0,232.67L942.0,244.79L941.2,245.01L940.5,244.87L939.7,244.80L939.0,245.85L938.2,246.07L937.4,245.41L936.7,245.96L935.9,248.17ZM942.6,239.0L942.6,230.96L943.4,232.19L944.2,233.05L945.0,233.67L945.7,233.86L946.5,234.15L947.3,234.11L948.1,234.05L948.1,243.88L947.3,243.48L946.5,243.76L945.7,244.26L945.0,244.63L944.2,245.20L943.4,245.13L942.6,246.89ZM948.7,239.0L948.7,231.33L949.5,233.00L950.3,232.19L951.0,232.58L951.8,233.06L952.6,233.63L953.4,233.85L954.1,233.99L954.1,243.86L953.4,244.52L952.6,244.17L951.8,244.66L951.0,245.55L950.3,245.74L949.5,245.35L948.7,247.14ZM906.6,237.11H954.8V240.89H906.6Z" fill="#5e9fba"/><rect x="276" y="285.40" width="709.5" height="1" fill="#7c6247"/><path d="M775.0,285.9L775.0,285.60L775.6,285.34L776.2,284.50L776.8,284.65L777.4,284.18L778.0,283.22L778.6,283.33L779.2,283.64L779.8,283.83L780.4,284.10L781.0,284.03L781.6,283.82L782.2,283.95L782.8,282.72L783.4,282.20L784.0,281.45L784.6,281.51L785.2,280.99L785.8,279.70L786.4,281.75L787.0,280.13L787.6,281.55L788.2,282.47L788.8,283.35L789.4,283.60L790.0,283.93L790.6,284.04L791.2,284.26L791.8,284.05L792.4,283.84L793.0,283.79L793.6,283.44L794.2,283.87L794.8,283.10L795.4,283.99L796.0,283.67L796.6,283.93L797.2,283.53L797.8,284.04L798.4,284.23L799.0,284.40L799.6,284.85L800.2,285.12L800.8,285.14L801.4,285.36L802.0,285.21L802.6,285.26L803.2,284.80L803.8,283.85L804.4,283.84L805.0,283.62L805.6,284.08L806.2,284.39L806.8,285.13L807.4,285.42L808.0,285.58L808.6,285.60L808.6,286.14L808.0,286.21L807.4,286.32L806.8,286.69L806.2,287.34L805.6,287.69L805.0,288.13L804.4,287.87L803.8,287.77L803.2,287.09L802.6,286.58L802.0,286.48L801.4,286.40L800.8,286.51L800.2,286.54L799.6,287.05L799.0,287.54L798.4,287.40L797.8,287.41L797.2,287.83L796.6,287.93L796.0,287.79L795.4,287.88L794.8,288.97L794.2,287.56L793.6,288.29L793.0,287.73L792.4,287.90L791.8,287.91L791.2,287.29L790.6,287.94L790.0,288.02L789.4,288.36L788.8,288.39L788.2,289.04L787.6,289.77L787.0,291.27L786.4,289.49L785.8,291.04L785.2,291.21L784.6,290.46L784.0,290.69L783.4,289.84L782.8,288.89L782.2,287.48L781.6,287.93L781.0,287.43L780.4,287.74L779.8,288.09L779.2,287.81L778.6,288.32L778.0,288.42L777.4,287.40L776.8,287.22L776.2,287.05L775.6,286.45L775.0,286.19ZM784.9,274.90000000000003h1V296.40000000000003h-1ZM782.6,279.90000000000003h0.9V292.90000000000003h-0.9ZM787.3,278.40000000000003h0.9V291.90000000000003h-0.9ZM760.9,283.90000000000003h0.9V287.90000000000003h-0.9Z" fill="#cb976a"/><rect x="276" y="332.30" width="709.5" height="1" fill="#5e3347"/><path d="M276.0,333.3L276.0,330.86L276.9,330.00L277.9,330.67L278.9,331.19L279.8,330.35L280.8,331.28L281.7,331.25L282.6,327.49L283.6,329.44L284.6,330.03L285.5,327.19L286.4,327.09L287.4,330.83L288.4,331.12L289.3,330.21L290.2,329.99L291.2,329.98L292.1,330.03L293.1,328.75L294.1,329.05L295.0,330.22L295.9,326.08L296.9,329.04L297.9,328.79L298.8,328.45L299.8,330.79L300.7,328.55L301.6,328.46L302.6,330.73L303.6,329.11L304.5,330.79L305.4,328.85L306.4,330.82L307.4,326.69L308.3,329.47L309.2,330.04L310.2,330.87L311.1,331.04L312.1,331.12L313.1,330.98L314.0,329.62L314.9,330.92L315.9,331.15L316.9,330.09L317.8,331.44L318.8,331.39L319.7,330.74L320.6,329.33L321.6,332.02L322.6,331.68L323.5,331.09L324.4,329.54L325.4,329.79L326.4,330.29L327.3,327.86L328.2,329.45L329.2,327.91L330.1,329.57L331.1,327.41L332.1,328.83L333.0,330.02L333.9,329.36L334.9,329.29L335.9,328.18L336.8,329.51L337.8,329.84L338.7,328.22L339.6,328.02L340.6,327.00L341.6,329.94L342.5,323.23L343.4,329.38L344.4,328.03L345.4,328.75L346.3,326.79L347.2,327.83L348.2,323.64L349.1,330.12L350.1,328.07L351.1,330.21L352.0,328.90L352.9,329.46L353.9,330.22L354.9,328.42L355.8,328.51L356.8,328.45L357.7,329.72L358.6,328.37L359.6,329.70L360.6,328.59L361.5,329.17L362.4,329.26L363.4,330.53L364.4,328.16L365.3,328.82L366.2,328.78L367.2,329.52L368.1,330.45L369.1,330.57L370.1,329.36L371.0,328.76L371.9,328.96L372.9,325.10L373.9,329.77L374.8,330.02L375.8,328.08L376.7,329.33L377.6,329.63L378.6,329.97L379.6,328.25L380.5,328.06L381.4,328.93L382.4,330.20L383.4,328.33L384.3,328.71L385.2,329.91L386.2,329.49L387.1,330.14L388.1,329.12L389.1,329.95L390.0,328.31L390.9,325.73L391.9,325.81L392.9,329.13L393.8,330.14L394.8,330.87L395.7,326.13L396.6,329.03L397.6,326.30L398.6,329.58L399.5,329.63L400.4,329.21L401.4,329.42L402.4,329.83L403.3,330.88L404.2,329.12L405.2,330.14L406.1,329.01L407.1,329.15L408.0,329.66L409.0,325.23L409.9,328.07L410.9,330.19L411.9,328.76L412.8,329.80L413.8,329.11L414.7,329.57L415.6,330.65L416.6,331.07L417.5,331.68L418.5,331.86L419.4,329.63L420.4,329.43L421.4,329.09L422.3,326.54L423.2,329.36L424.2,327.66L425.1,322.25L426.1,322.25L427.0,326.75L428.0,328.44L428.9,329.15L429.9,327.78L430.9,326.60L431.8,326.22L432.8,322.25L433.7,328.85L434.6,328.60L435.6,327.33L436.5,326.59L437.5,328.53L438.4,326.58L439.4,328.90L440.4,326.15L441.3,327.63L442.2,327.81L443.2,322.52L444.1,326.36L445.1,328.40L446.0,327.88L447.0,322.85L447.9,328.04L448.9,326.66L449.9,329.03L450.8,329.54L451.8,327.29L452.7,328.45L453.6,329.42L454.6,327.08L455.5,323.57L456.5,329.51L457.4,327.98L458.4,329.06L459.4,329.88L460.3,329.84L461.2,329.45L462.2,328.59L463.1,329.06L464.1,328.59L465.0,329.59L466.0,328.25L466.9,327.60L467.9,327.58L468.9,327.94L469.8,327.44L470.8,329.25L471.7,329.55L472.6,327.49L473.6,329.48L474.5,329.42L475.5,327.66L476.4,327.79L477.4,328.98L478.4,330.17L479.3,328.12L480.2,327.23L481.2,328.64L482.1,328.63L483.1,323.82L484.0,323.78L485.0,328.41L485.9,328.34L486.9,329.54L487.9,327.43L488.8,327.13L489.8,329.88L490.7,328.58L491.6,329.00L492.6,328.37L493.5,323.37L494.5,327.72L495.4,329.41L496.4,327.54L497.4,329.33L498.3,323.17L499.2,326.96L500.2,327.58L501.1,327.85L502.1,327.97L503.0,326.72L504.0,329.14L504.9,327.56L505.9,327.35L506.9,327.11L507.8,327.79L508.8,327.59L509.7,323.51L510.6,328.99L511.6,330.07L512.5,328.08L513.5,329.39L514.5,328.04L515.4,328.08L516.4,328.50L517.3,327.06L518.2,328.02L519.2,323.92L520.1,328.32L521.1,329.38L522.0,329.98L523.0,328.91L524.0,329.26L524.9,328.24L525.9,326.81L526.8,326.65L527.8,323.07L528.7,327.86L529.6,329.70L530.6,329.27L531.5,329.19L532.5,322.53L533.5,326.33L534.4,327.78L535.3,328.32L536.3,327.22L537.2,328.55L538.2,321.98L539.1,321.90L540.1,328.92L541.0,328.01L542.0,321.66L543.0,325.62L543.9,329.12L544.8,327.70L545.8,325.94L546.8,327.97L547.7,327.66L548.6,327.28L549.6,328.78L550.5,329.10L551.5,326.14L552.5,329.80L553.4,329.86L554.3,329.68L555.3,329.21L556.2,328.52L557.2,327.73L558.1,328.30L559.1,329.97L560.0,327.80L561.0,329.09L562.0,328.06L562.9,328.33L563.8,327.81L564.8,329.37L565.8,327.25L566.7,323.67L567.6,329.25L568.6,328.10L569.5,323.54L570.5,329.79L571.5,328.28L572.4,328.83L573.3,329.34L574.3,327.58L575.2,329.76L576.2,327.32L577.1,327.43L578.1,328.55L579.0,327.24L580.0,327.74L581.0,328.88L581.9,327.53L582.8,328.62L583.8,329.73L584.8,323.50L585.7,328.29L586.6,327.95L587.6,323.75L588.5,329.51L589.5,329.95L590.5,328.01L591.4,329.40L592.3,329.21L593.3,329.22L594.2,328.24L595.2,327.67L596.1,327.74L597.1,328.11L598.0,329.54L599.0,327.83L600.0,329.80L600.9,329.50L601.8,329.44L602.8,330.02L603.8,328.39L604.7,328.32L605.6,330.13L606.6,328.27L607.5,330.58L608.5,329.22L609.5,328.14L610.4,325.39L611.3,329.30L612.3,325.50L613.2,328.87L614.2,330.55L615.1,330.41L616.1,329.09L617.0,330.15L618.0,329.34L619.0,329.63L619.9,328.07L620.8,329.29L621.8,328.64L622.8,328.06L623.7,328.25L624.6,328.13L625.6,328.47L626.5,328.67L627.5,330.10L628.5,329.99L629.4,331.07L630.3,331.03L631.3,331.87L632.2,332.27L633.2,332.11L634.1,332.25L635.1,332.12L636.0,331.30L637.0,332.04L638.0,331.31L638.9,331.93L639.8,331.65L640.8,331.54L641.8,330.99L642.7,331.55L643.6,331.54L644.6,331.29L645.5,330.47L646.5,331.31L647.5,330.22L648.4,330.77L649.3,330.84L650.3,331.55L651.2,330.38L652.2,330.89L653.1,331.35L654.1,330.83L655.0,331.84L656.0,331.38L657.0,330.98L657.9,331.78L658.8,331.63L659.8,331.01L660.8,331.37L661.7,331.86L662.6,331.70L663.6,331.51L664.5,329.26L665.5,330.50L666.5,328.40L667.4,328.91L668.3,327.27L669.3,327.36L670.2,327.38L671.2,326.74L672.1,326.84L673.1,327.66L674.0,328.94L675.0,328.21L676.0,329.00L676.9,327.27L677.8,327.56L678.8,328.51L679.8,326.80L680.7,325.21L681.6,328.90L682.6,326.01L683.5,326.76L684.5,329.16L685.5,326.06L686.4,326.93L687.3,327.99L688.3,328.39L689.2,328.14L690.2,328.73L691.1,327.00L692.1,326.22L693.0,327.03L694.0,326.65L695.0,329.15L695.9,327.19L696.8,329.01L697.8,326.61L698.8,329.33L699.7,329.09L700.6,322.16L701.6,326.17L702.5,327.62L703.5,326.58L704.5,327.97L705.4,321.49L706.3,327.79L707.3,325.41L708.2,326.62L709.2,329.16L710.1,327.78L711.1,328.70L712.0,326.97L713.0,325.74L714.0,328.57L714.9,325.64L715.8,327.93L716.8,328.83L717.8,325.64L718.7,326.78L719.6,328.82L720.6,327.31L721.5,329.37L722.5,327.67L723.5,328.63L724.4,328.60L725.3,329.48L726.3,329.50L727.2,328.19L728.2,328.19L729.1,327.13L730.1,327.49L731.0,329.75L732.0,329.28L733.0,329.48L733.9,327.73L734.8,324.17L735.8,330.24L736.8,327.48L737.7,328.50L738.6,328.53L739.6,329.41L740.5,324.80L741.5,329.94L742.5,330.10L743.4,328.91L744.3,329.04L745.3,328.91L746.2,324.80L747.2,328.62L748.1,327.81L749.1,329.18L750.0,328.75L751.0,328.38L752.0,329.14L752.9,328.15L753.8,329.35L754.8,328.92L755.8,329.03L756.7,329.29L757.6,324.80L758.6,328.47L759.5,328.45L760.5,328.41L761.5,324.86L762.4,330.19L763.3,329.16L764.3,330.42L765.2,329.14L766.2,329.76L767.1,325.10L768.1,328.17L769.0,328.85L770.0,329.52L771.0,330.07L771.9,329.17L772.8,330.42L773.8,330.37L774.8,325.43L775.7,330.09L776.6,325.51L777.6,328.46L778.5,329.75L779.5,325.63L780.5,330.68L781.4,329.90L782.3,328.17L783.3,329.32L784.2,329.73L785.2,327.97L786.1,328.04L787.1,329.00L788.0,327.72L789.0,329.67L789.9,329.63L790.9,330.15L791.9,328.25L792.8,327.89L793.8,328.56L794.7,328.75L795.6,325.39L796.6,330.21L797.5,329.12L798.5,330.51L799.4,329.49L800.4,330.22L801.4,329.04L802.3,330.51L803.2,328.90L804.2,330.36L805.1,330.78L806.1,329.95L807.0,326.20L808.0,329.54L808.9,330.34L809.9,330.71L810.9,329.10L811.8,330.22L812.8,330.43L813.7,325.92L814.6,329.73L815.6,329.90L816.5,329.59L817.5,329.43L818.4,329.90L819.4,328.82L820.4,329.51L821.3,329.06L822.2,328.38L823.2,328.82L824.1,329.25L825.1,329.67L826.0,328.80L827.0,330.19L827.9,330.22L828.9,325.65L829.9,329.28L830.8,329.34L831.8,330.33L832.7,330.74L833.6,329.68L834.6,330.12L835.5,330.82L836.5,330.22L837.4,330.41L838.4,331.85L839.4,332.35L840.3,332.22L841.2,332.49L842.2,332.62L843.1,332.60L844.1,332.63L845.0,331.97L846.0,329.14L846.9,328.68L847.9,324.63L848.9,329.84L849.8,329.74L850.8,331.04L851.7,331.85L852.6,330.97L853.6,331.80L854.5,330.52L855.5,332.52L856.4,330.72L857.4,329.44L858.4,326.79L859.3,327.21L860.2,327.64L861.2,325.13L862.1,329.03L863.1,320.91L864.0,327.85L865.0,325.77L865.9,325.73L866.9,327.74L867.9,327.82L868.8,328.50L869.8,328.65L870.7,328.69L871.6,328.43L872.6,327.98L873.5,325.09L874.5,325.53L875.4,320.47L876.4,326.06L877.4,320.15L878.3,328.12L879.2,327.12L880.2,325.62L881.1,327.22L882.1,324.68L883.0,325.47L884.0,319.87L884.9,327.47L885.9,328.54L886.9,327.49L887.8,320.03L888.8,327.23L889.7,328.78L890.6,320.15L891.6,327.63L892.5,326.65L893.5,325.98L894.4,325.92L895.4,328.41L896.4,327.86L897.3,327.34L898.2,325.42L899.2,327.86L900.1,320.56L901.1,329.02L902.0,326.78L903.0,325.11L903.9,326.41L904.9,328.30L905.9,326.48L906.8,325.69L907.8,320.99L908.7,327.54L909.6,329.04L910.6,327.98L911.5,328.20L912.5,327.74L913.4,328.69L914.4,328.43L915.4,328.05L916.3,328.82L917.2,326.70L918.2,321.58L919.1,327.95L920.1,329.23L921.0,329.28L922.0,327.29L922.9,328.30L923.9,329.46L924.9,326.23L925.8,328.61L926.8,328.91L927.7,327.35L928.6,328.31L929.6,326.22L930.5,327.39L931.5,328.20L932.4,328.71L933.4,326.58L934.4,322.50L935.3,329.28L936.2,328.69L937.2,326.37L938.1,329.14L939.1,327.47L940.0,329.84L941.0,328.51L941.9,328.20L942.9,328.04L943.9,328.02L944.8,326.68L945.8,328.72L946.7,328.76L947.6,327.35L948.6,326.31L949.5,329.11L950.5,327.83L951.4,328.20L952.4,326.70L953.4,328.57L954.3,328.16L955.2,327.40L956.2,321.71L957.1,329.18L958.1,329.23L959.0,326.96L960.0,329.23L960.9,322.92L961.9,329.11L962.9,327.44L963.8,327.84L964.8,327.98L965.7,329.30L966.6,327.96L967.6,328.93L968.5,328.72L969.5,328.58L970.4,330.52L971.4,329.35L972.4,326.45L973.3,329.89L974.2,329.27L975.2,330.02L976.1,330.25L977.1,329.84L978.0,331.50L979.0,328.32L979.9,331.29L980.9,330.33L981.9,329.01L982.8,331.24L983.8,331.57L984.7,331.17L984.7,335.33L983.8,334.94L982.8,335.26L981.9,337.37L980.9,336.12L979.9,335.21L979.0,338.03L978.0,335.01L977.1,336.59L976.1,336.20L975.2,336.42L974.2,337.13L973.3,336.54L972.4,339.81L971.4,337.05L970.4,335.94L969.5,337.78L968.5,337.65L967.6,337.45L966.6,338.37L965.7,337.10L964.8,338.35L963.8,338.49L962.9,338.86L961.9,337.28L960.9,343.16L960.0,337.17L959.0,339.33L958.1,337.17L957.1,337.22L956.2,344.31L955.2,338.91L954.3,338.18L953.4,337.80L952.4,339.57L951.4,338.14L950.5,338.49L949.5,337.28L948.6,339.94L947.6,338.95L946.7,337.61L945.8,337.65L944.8,339.59L943.9,338.31L942.9,338.30L941.9,338.15L941.0,337.85L940.0,336.58L939.1,338.84L938.1,337.25L937.2,339.88L936.2,337.68L935.3,337.12L934.4,343.56L933.4,339.69L932.4,337.66L931.5,338.14L930.5,338.91L929.6,340.03L928.6,338.04L927.7,338.95L926.8,337.47L925.8,337.76L924.9,340.01L923.9,336.95L922.9,338.05L922.0,339.01L921.0,337.11L920.1,337.16L919.1,338.38L918.2,344.43L917.2,339.57L916.3,337.56L915.4,338.29L914.4,337.93L913.4,337.68L912.5,338.58L911.5,338.14L910.6,338.35L909.6,337.35L908.7,338.78L907.8,345.00L906.8,340.53L905.9,339.78L904.9,338.05L903.9,339.85L903.0,341.08L902.0,339.49L901.1,337.37L900.1,345.40L899.2,338.47L898.2,340.79L897.3,338.96L896.4,338.47L895.4,337.95L894.4,340.31L893.5,340.26L892.5,339.61L891.6,338.68L890.6,345.79L889.7,337.60L888.8,339.07L887.8,345.91L886.9,338.82L885.9,337.82L884.9,338.84L884.0,346.06L883.0,340.74L882.1,341.49L881.1,339.07L880.2,340.60L879.2,339.17L878.3,338.22L877.4,345.79L876.4,340.17L875.4,345.49L874.5,340.68L873.5,341.10L872.6,338.35L871.6,337.93L870.7,337.68L869.8,337.71L868.8,337.86L867.9,338.51L866.9,338.58L865.9,340.49L865.0,340.45L864.0,338.48L863.1,345.07L862.1,337.35L861.2,341.06L860.2,338.67L859.3,339.09L858.4,339.48L857.4,336.97L856.4,335.76L855.5,334.04L854.5,335.94L853.6,334.72L852.6,335.52L851.7,334.68L850.8,335.45L849.8,336.68L848.9,336.59L847.9,341.54L846.9,337.69L846.0,337.25L845.0,334.57L844.1,333.94L843.1,333.97L842.2,333.94L841.2,334.07L840.3,334.32L839.4,334.20L838.4,334.68L837.4,336.05L836.5,336.23L835.5,335.66L834.6,336.32L833.6,336.73L832.7,335.74L831.8,336.13L830.8,337.06L829.9,337.12L828.9,340.57L827.9,336.22L827.0,336.26L826.0,337.58L825.1,336.75L824.1,337.15L823.2,337.56L822.2,337.97L821.3,337.33L820.4,336.90L819.4,337.55L818.4,336.53L817.5,336.97L816.5,336.82L815.6,336.53L814.6,336.70L813.7,340.31L812.8,336.03L811.8,336.22L810.9,337.29L809.9,335.76L808.9,336.11L808.0,336.87L807.0,340.04L806.1,336.48L805.1,335.69L804.2,336.09L803.2,337.48L802.3,335.95L801.4,337.34L800.4,336.23L799.4,336.92L798.5,335.95L797.5,337.27L796.6,336.23L795.6,340.81L794.7,337.63L793.8,337.80L792.8,338.44L791.9,338.09L790.9,336.30L789.9,336.78L789.0,336.75L788.0,338.61L787.1,337.38L786.1,338.30L785.2,338.37L784.2,336.69L783.3,337.08L782.3,338.17L781.4,336.53L780.5,335.79L779.5,340.59L778.5,336.67L777.6,337.90L776.6,340.70L775.7,336.35L774.8,340.78L773.8,336.08L772.8,336.03L771.9,337.22L771.0,336.37L770.0,336.89L769.0,337.53L768.1,338.18L767.1,341.09L766.2,336.67L765.2,337.25L764.3,336.04L763.3,337.23L762.4,336.26L761.5,341.32L760.5,337.95L759.5,337.91L758.6,337.89L757.6,341.38L756.7,337.11L755.8,337.36L754.8,337.47L753.8,337.05L752.9,338.19L752.0,337.25L751.0,337.98L750.0,337.62L749.1,337.21L748.1,338.51L747.2,337.74L746.2,341.38L745.3,337.47L744.3,337.34L743.4,337.47L742.5,336.34L741.5,336.49L740.5,341.38L739.6,337.00L738.6,337.83L737.7,337.86L736.8,338.83L735.8,336.21L734.8,341.97L733.9,338.59L733.0,336.93L732.0,337.12L731.0,336.67L730.1,338.82L729.1,339.17L728.2,338.15L727.2,338.15L726.3,336.91L725.3,336.93L724.4,337.77L723.5,337.74L722.5,338.65L721.5,337.03L720.6,338.99L719.6,337.55L718.7,339.49L717.8,340.58L716.8,337.54L715.8,338.40L714.9,340.58L714.0,337.79L713.0,340.48L712.0,339.32L711.1,337.67L710.1,338.55L709.2,337.24L708.2,339.65L707.3,340.80L706.3,338.54L705.4,344.52L704.5,338.37L703.5,339.68L702.5,338.70L701.6,340.08L700.6,343.88L699.7,337.30L698.8,337.07L697.8,339.65L696.8,337.38L695.9,339.10L695.0,337.24L694.0,339.62L693.0,339.26L692.1,340.03L691.1,339.29L690.2,337.64L689.2,338.20L688.3,337.97L687.3,338.35L686.4,339.35L685.5,340.18L684.5,337.24L683.5,339.51L682.6,340.22L681.6,337.48L680.7,340.99L679.8,339.48L678.8,337.85L677.8,338.75L676.9,339.03L676.0,337.38L675.0,338.13L674.0,337.44L673.1,338.65L672.1,339.44L671.2,339.53L670.2,338.93L669.3,338.94L668.3,339.03L667.4,337.47L666.5,337.95L665.5,335.96L664.5,337.14L663.6,335.00L662.6,334.82L661.7,334.66L660.8,335.13L659.8,335.47L658.8,334.89L657.9,334.74L657.0,335.51L656.0,335.12L655.0,334.69L654.1,335.64L653.1,335.16L652.2,335.59L651.2,336.08L650.3,334.96L649.3,335.64L648.4,335.70L647.5,336.23L646.5,335.19L645.5,335.99L644.6,335.21L643.6,334.97L642.7,334.96L641.8,335.50L640.8,334.97L639.8,334.86L638.9,334.60L638.0,335.19L637.0,334.50L636.0,335.20L635.1,334.42L634.1,334.30L633.2,334.43L632.2,334.28L631.3,334.65L630.3,335.45L629.4,335.42L628.5,336.44L627.5,336.34L626.5,337.70L625.6,337.89L624.6,338.21L623.7,338.09L622.8,338.28L621.8,337.73L620.8,337.11L619.9,338.27L619.0,336.78L618.0,337.06L617.0,336.29L616.1,337.30L615.1,336.04L614.2,335.91L613.2,337.51L612.3,340.71L611.3,337.10L610.4,340.82L609.5,338.20L608.5,337.17L607.5,335.88L606.6,338.08L605.6,336.31L604.7,338.03L603.8,337.96L602.8,336.42L601.8,336.97L600.9,336.91L600.0,336.62L599.0,338.50L598.0,336.87L597.1,338.24L596.1,338.59L595.2,338.65L594.2,338.11L593.3,337.18L592.3,337.19L591.4,337.01L590.5,338.33L589.5,336.48L588.5,336.90L587.6,342.38L586.6,338.38L585.7,338.06L584.8,342.61L583.8,336.69L582.8,337.75L581.9,338.79L581.0,337.50L580.0,338.58L579.0,339.05L578.1,337.81L577.1,338.88L576.2,338.98L575.2,336.66L574.3,338.74L573.3,337.06L572.4,337.54L571.5,338.07L570.5,336.63L569.5,342.57L568.6,338.24L567.6,337.15L566.7,342.45L565.8,339.05L564.8,337.03L563.8,338.52L562.9,338.02L562.0,338.27L561.0,337.30L560.0,338.52L559.1,336.46L558.1,338.05L557.2,338.59L556.2,337.84L555.3,337.19L554.3,336.74L553.4,336.57L552.5,336.62L551.5,340.11L550.5,337.29L549.6,337.59L548.6,339.02L547.7,338.65L546.8,338.37L545.8,340.29L544.8,338.62L543.9,337.27L543.0,340.60L542.0,344.36L541.0,338.33L540.1,337.46L539.1,344.13L538.2,344.06L537.2,337.82L536.3,339.08L535.3,338.03L534.4,338.55L533.5,339.92L532.5,343.53L531.5,337.20L530.6,337.13L529.6,336.72L528.7,338.47L527.8,343.02L526.8,339.62L525.9,339.46L524.9,338.10L524.0,337.14L523.0,337.47L522.0,336.45L521.1,337.03L520.1,338.04L519.2,342.21L518.2,338.32L517.3,339.22L516.4,337.86L515.4,338.26L514.5,338.30L513.5,337.01L512.5,338.26L511.6,336.37L510.6,337.39L509.7,342.60L508.8,338.73L507.8,338.53L506.9,339.18L505.9,338.95L504.9,338.75L504.0,337.25L503.0,339.55L502.1,338.36L501.1,338.48L500.2,338.74L499.2,339.32L498.3,342.92L497.4,337.07L496.4,338.77L495.4,337.00L494.5,338.61L493.5,342.73L492.6,337.99L491.6,337.39L490.7,337.79L489.8,336.54L488.8,339.16L487.9,338.88L486.9,336.87L485.9,338.01L485.0,337.94L484.0,342.35L483.1,342.31L482.1,337.74L481.2,337.73L480.2,339.07L479.3,338.22L478.4,336.28L477.4,337.40L476.4,338.54L475.5,338.66L474.5,336.99L473.6,336.93L472.6,338.82L471.7,336.86L470.8,337.15L469.8,338.87L468.9,338.39L467.9,338.73L466.9,338.72L466.0,338.09L465.0,336.82L464.1,337.77L463.1,337.33L462.2,337.78L461.2,336.96L460.3,336.59L459.4,336.55L458.4,337.32L457.4,338.35L456.5,336.91L455.5,342.54L454.6,339.21L453.6,336.99L452.7,337.91L451.8,339.01L450.8,336.87L449.9,337.36L448.9,339.60L447.9,338.30L447.0,343.23L446.0,338.45L445.1,337.95L444.1,339.89L443.2,343.54L442.2,338.52L441.3,338.69L440.4,340.09L439.4,337.48L438.4,339.68L437.5,337.84L436.5,339.68L435.6,338.97L434.6,337.76L433.7,337.52L432.8,343.80L431.8,340.03L430.9,339.66L429.9,338.54L428.9,337.24L428.0,337.92L427.0,339.52L426.1,343.80L425.1,343.80L424.2,338.66L423.2,337.04L422.3,339.72L421.4,337.30L420.4,336.98L419.4,336.79L418.5,334.67L417.5,334.84L416.6,335.42L415.6,335.82L414.7,336.84L413.8,337.28L412.8,336.62L411.9,337.61L410.9,336.25L409.9,338.27L409.0,340.97L408.0,336.76L407.1,337.24L406.1,337.37L405.2,336.30L404.2,337.27L403.3,335.60L402.4,336.59L401.4,336.99L400.4,337.18L399.5,336.79L398.6,336.83L397.6,339.95L396.6,337.36L395.7,340.11L394.8,335.61L393.8,336.30L392.9,337.26L391.9,340.41L390.9,340.49L390.0,338.04L389.1,336.48L388.1,337.27L387.1,336.30L386.2,336.92L385.2,336.52L384.3,337.66L383.4,338.02L382.4,336.25L381.4,337.45L380.5,338.28L379.6,338.09L378.6,336.47L377.6,336.79L376.7,337.07L375.8,338.26L374.8,336.42L373.9,336.65L372.9,341.09L371.9,337.42L371.0,337.61L370.1,337.04L369.1,335.89L368.1,336.01L367.2,336.89L366.2,337.60L365.3,337.56L364.4,338.19L363.4,335.93L362.4,337.14L361.5,337.22L360.6,337.77L359.6,336.72L358.6,337.99L357.7,336.70L356.8,337.90L355.8,337.85L354.9,337.93L353.9,336.22L352.9,336.95L352.0,337.48L351.1,336.23L350.1,338.27L349.1,336.32L348.2,342.47L347.2,338.50L346.3,339.48L345.4,337.62L344.4,338.30L343.4,337.03L342.5,342.87L341.6,336.49L340.6,339.29L339.6,338.32L338.7,338.12L337.8,336.59L336.8,336.90L335.9,338.17L334.9,337.11L333.9,337.04L333.0,336.42L332.1,337.55L331.1,338.90L330.1,336.84L329.2,338.42L328.2,336.96L327.3,338.47L326.4,336.16L325.4,336.64L324.4,336.87L323.5,335.40L322.6,334.83L321.6,334.52L320.6,337.08L319.7,335.73L318.8,335.12L317.8,335.07L316.9,336.35L315.9,335.35L314.9,335.56L314.0,336.80L313.1,335.50L312.1,335.37L311.1,335.45L310.2,335.61L309.2,336.39L308.3,336.94L307.4,339.58L306.4,335.66L305.4,337.53L304.5,335.69L303.6,337.28L302.6,335.75L301.6,337.90L300.7,337.81L299.8,335.69L298.8,337.91L297.9,337.59L296.9,337.35L295.9,340.16L295.0,336.23L294.1,337.34L293.1,337.62L292.1,336.41L291.2,336.45L290.2,336.44L289.3,336.24L288.4,335.37L287.4,335.65L286.4,339.20L285.5,339.10L284.6,336.41L283.6,336.96L282.6,338.82L281.7,335.25L280.8,335.22L279.8,336.11L278.9,335.30L277.9,335.80L276.9,336.43L276.0,335.62Z" fill="#b8708e"/>
<rect x="274.85" y="100" width="1.35" height="240" fill="rgba(255,255,255,0.64)"/>
<path d="M272.6,96.1h5.8q0.8,0 0.8,0.8v5.3l-3.7,4.1l-3.7,-4.1v-5.3q0,-0.8 0.8,-0.8Z" fill="#fff"/>
</svg>
<div class="bottom"></div>
<div class="abs " style="left:538px;transform:scaleX(1.0969);transform-origin:0 0;top:350px;font-size:8.4px;line-height:10px;color:#f0f0f0">00:00</div>
<div class="abs " style="left:565px;letter-spacing:0.146px;top:350px;font-size:8.4px;line-height:10px;color:#7a7a7a">/ 02:39</div>
<div class="abs" style="left:548px;top:370.8px;width:33.9px;height:31.7px;border-radius:50%;background:#fff"></div>
<svg class="abs" style="left:559.8px;top:379.6px" width="12.4" height="14" viewBox="0 0 12 14" preserveAspectRatio="none"><path d="M1.2,1.6V12.4Q1.2,13.4 2.2,12.9L10.8,7.8Q11.6,7 10.8,6.3L2.2,1.1Q1.2,0.6 1.2,1.6Z" fill="#111"/></svg>
<svg class="abs" style="left:502px;top:380px" width="20" height="13" viewBox="0 0 20 13"><path d="M0.8,6.3L10.8,0.7V11.9Z" fill="#fff"/><rect x="0" y="5.9" width="8.6" height="7" fill="#171717"/><path d="M9.6,6.3L17.5,0.8V11.8Z" fill="#fff"/><rect x="17.2" y="0.8" width="1.8" height="11" fill="#fff"/><text x="0.5" y="11.5" font-size="6.8" font-weight="bold" fill="#fff" font-family="Liberation Sans" letter-spacing="-0.3">15</text></svg>
<svg class="abs" style="left:608.5px;top:380px" width="20" height="13" viewBox="0 0 20 13"><path d="M18.6,6.3L8.6,0.7V11.9Z" fill="#fff"/><rect x="11.6" y="5.9" width="8.4" height="7" fill="#171717"/><path d="M10.2,6.3L2.3,0.8V11.8Z" fill="#fff"/><rect x="0.6" y="0.8" width="1.8" height="11" fill="#fff"/><text x="11.9" y="11.5" font-size="6.8" font-weight="bold" fill="#fff" font-family="Liberation Sans" letter-spacing="-0.3">15</text></svg>
<div class="botline"></div>
</div>
</body></html>
